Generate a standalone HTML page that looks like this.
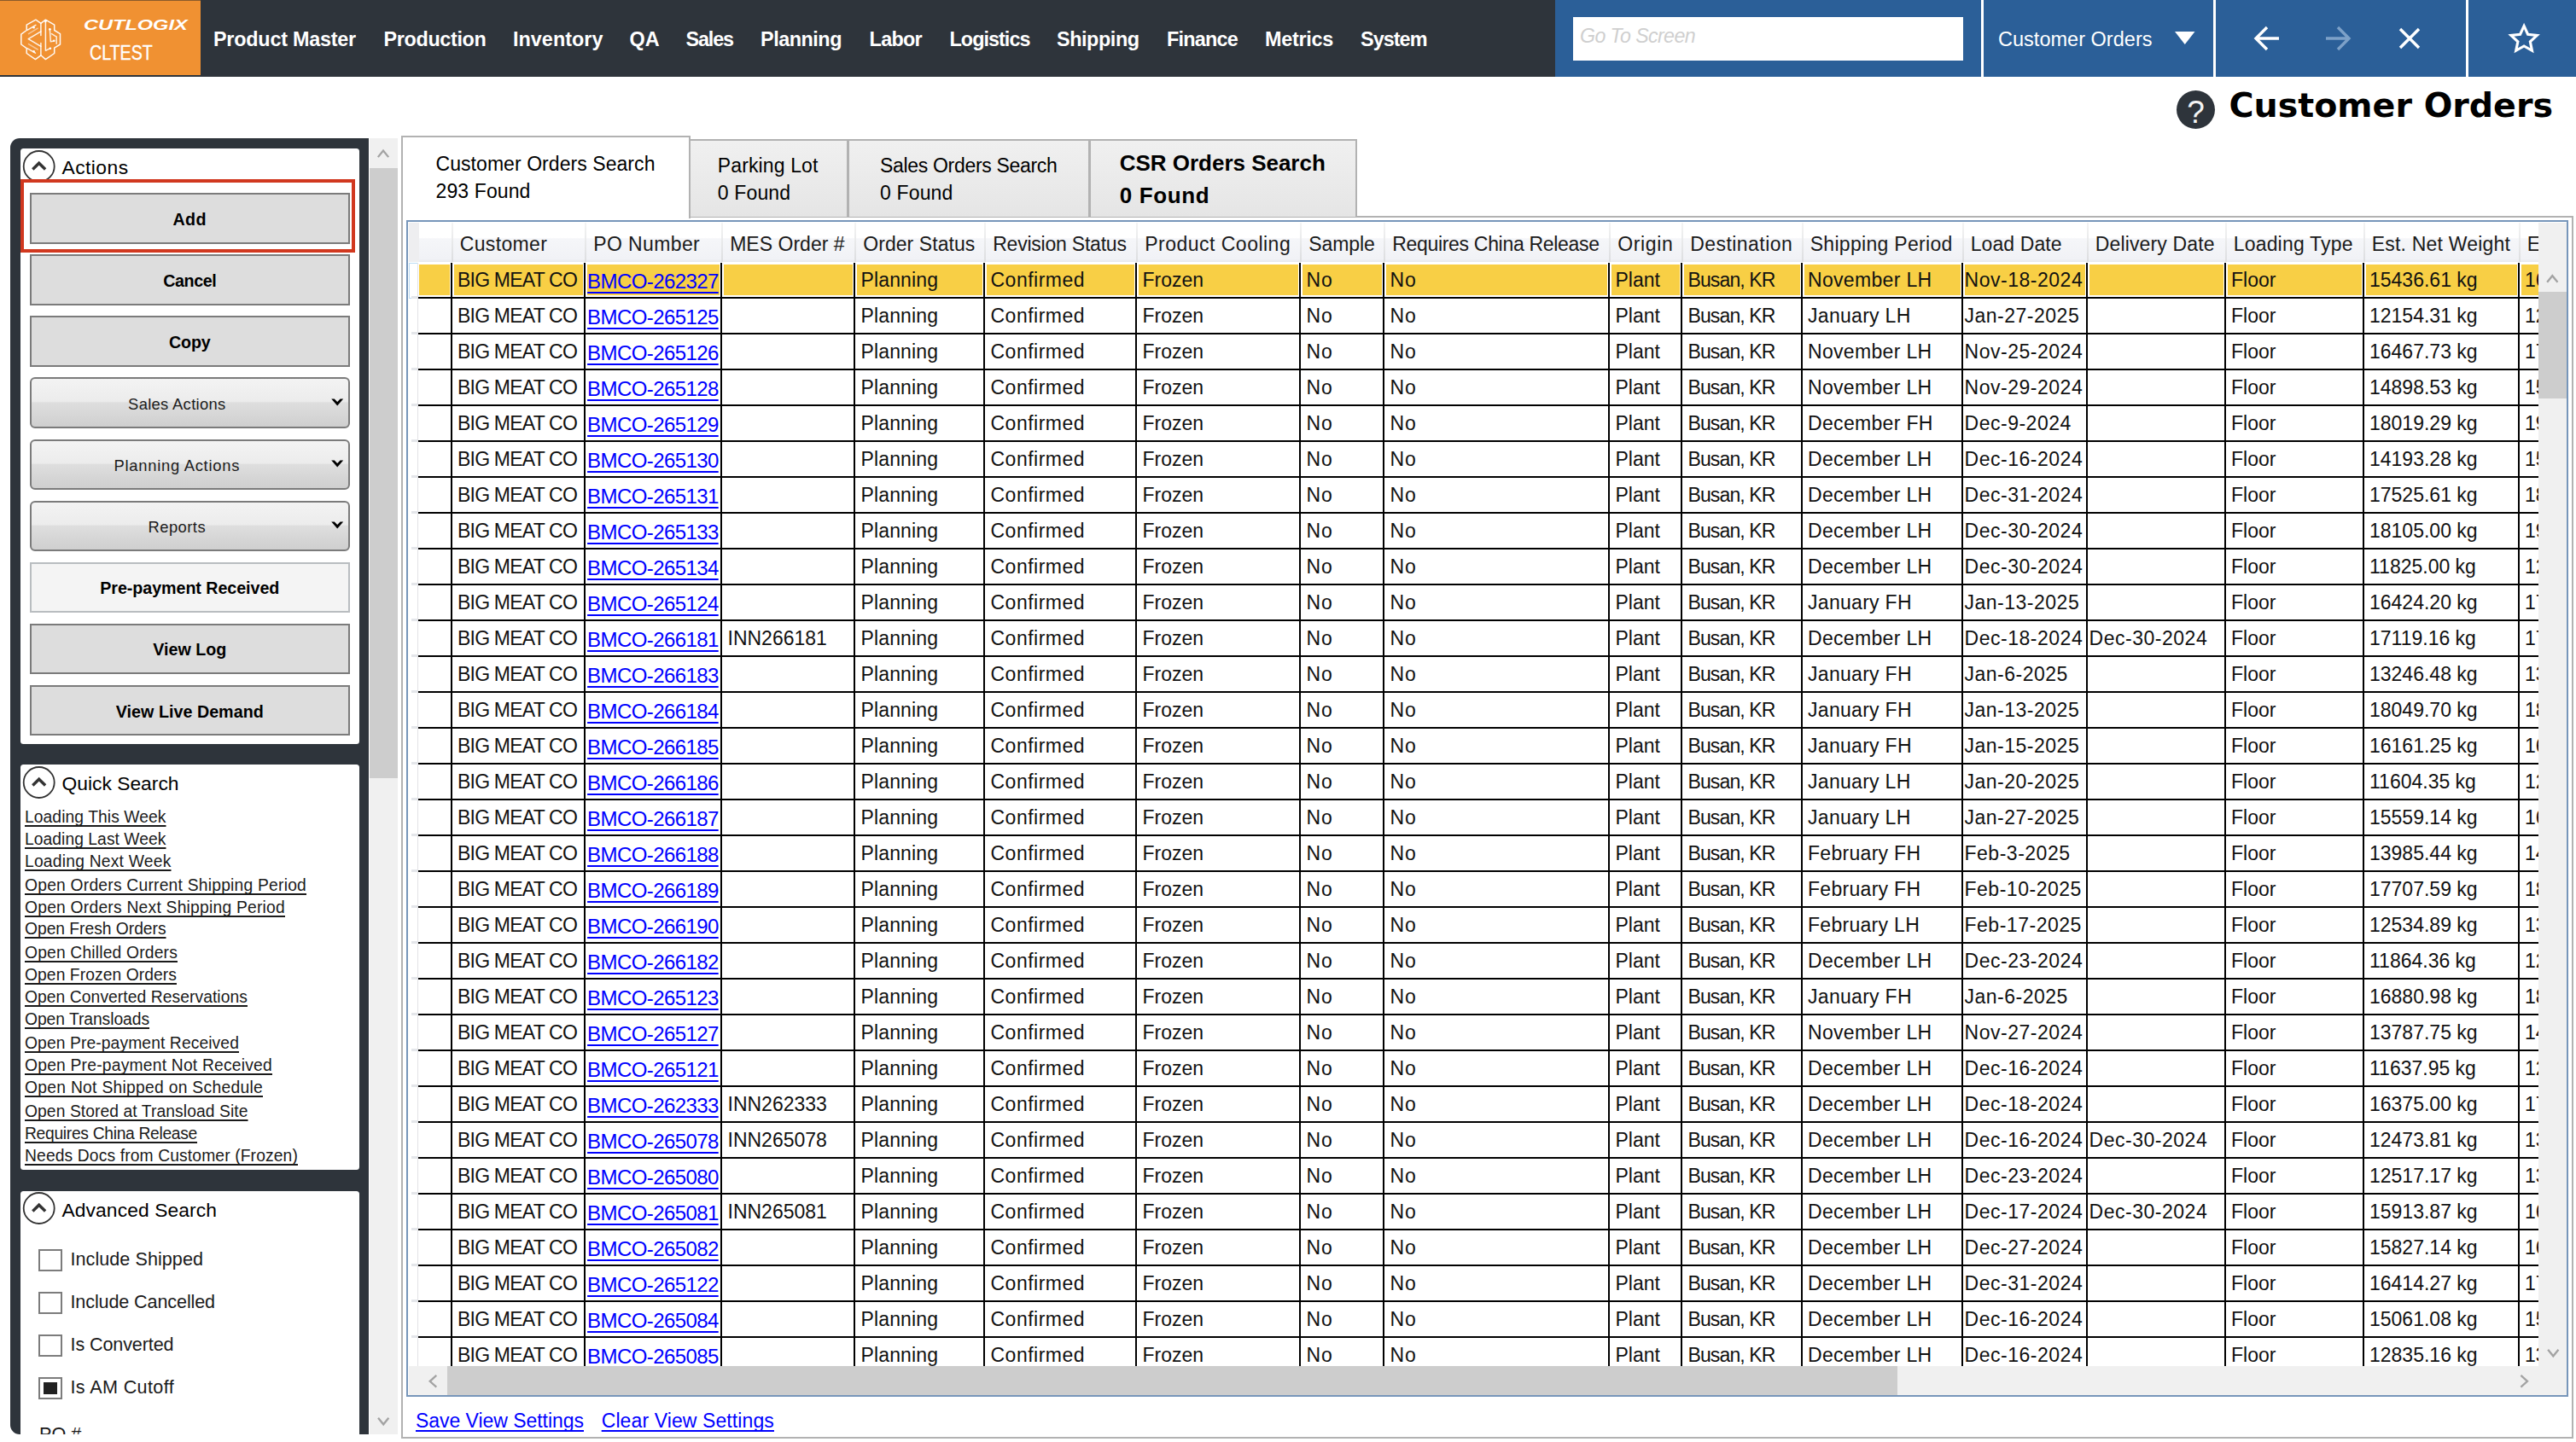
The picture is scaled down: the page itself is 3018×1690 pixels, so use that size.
<!DOCTYPE html>
<html lang="en"><head><meta charset="utf-8"><title>Customer Orders</title>
<style>html,body{margin:0;padding:0;background:#fff}body{position:relative;width:3018px;height:1690px;overflow:hidden;font-family:"Liberation Sans",sans-serif}</style>
</head><body>
<div style="position:absolute;left:0px;top:0px;width:3018px;height:90px;background:#2e343b"></div>
<div style="position:absolute;left:0px;top:0px;width:235px;height:88px;background:#f09132;border-top:1px solid #8a5a2a;box-sizing:border-box"></div>
<div style="position:absolute;left:1822px;top:0px;width:1196px;height:90px;background:#2b5f98"></div>
<svg style="position:absolute;left:20px;top:18px" width="56" height="56" viewBox="20 18 56 56" fill="none" stroke="#fff" stroke-width="1.5" stroke-linejoin="round" stroke-linecap="round">
<path d="M41.9 23.2 L31.2 29.1 L31.2 35.5 L24.8 40.1 L24.8 52 L31.2 56.6 L31.2 62.5 L41.5 69.6 L47.9 64.8 L53.4 69.6 L63.7 62.5 L63.7 56.1 L70.5 52 L70.5 39.6 L63.7 35.5 L63.7 29.1 L53.4 23.2 L47.9 27.3 Z" stroke-opacity="0.95"/>
<path d="M47.9 27.3 L47.9 41.5 M47.9 50.5 L47.9 64.8 M53.4 24.5 L53.4 59.3 L58.9 56.6" stroke-opacity="0.9"/>
<path d="M32.3 35.2 L41.9 29.4 M47.9 36.9 L33.2 45.6 L47.9 54.3 M32.3 56.8 L41.5 62.1" stroke-opacity="0.9"/>
<path d="M33.5 39.6 L44.2 33.2 M33.5 51.6 L44.2 58" stroke-opacity="0.5"/>
<path d="M58.4 34.5 L59.3 48.8 L63.2 47.9 M60.5 39.7 L66.2 43.1 M66.2 43.1 L66.2 51.2" stroke-opacity="0.85"/>
<circle cx="39.6" cy="32.3" r="1.3" fill="#fff" stroke="none"/><circle cx="39.6" cy="60.2" r="1.3" fill="#fff" stroke="none"/><circle cx="58.4" cy="34.3" r="1.4" fill="#fff" stroke="none"/><circle cx="63.3" cy="47.8" r="1.3" fill="#fff" stroke="none"/><circle cx="58.9" cy="56.7" r="1.3" fill="#fff" stroke="none"/><circle cx="53.4" cy="25" r="1.2" fill="#fff" stroke="none"/>
</svg>
<span style="position:absolute;left:98.30px;top:21.95px;line-height:1;white-space:pre;font-family:'Liberation Sans',sans-serif;font-size:16.6px;font-weight:bold;font-style:italic;color:#fff;transform:scaleX(1.4195);transform-origin:0 0;">CUTLOGIX</span>
<span style="position:absolute;left:104.80px;top:49.51px;line-height:1;white-space:pre;font-family:'Liberation Sans',sans-serif;font-size:24.2px;font-weight:normal;color:#fff;transform:scaleX(0.8103);transform-origin:0 0;-webkit-text-stroke:0.4px #fff;">CLTEST</span>
<span style="position:absolute;left:250.00px;top:34.69px;line-height:1;white-space:pre;font-family:'Liberation Sans',sans-serif;font-size:23.4px;font-weight:bold;color:#fff;letter-spacing:-0.234px;">Product Master</span>
<span style="position:absolute;left:449.50px;top:34.69px;line-height:1;white-space:pre;font-family:'Liberation Sans',sans-serif;font-size:23.4px;font-weight:bold;color:#fff;letter-spacing:-0.345px;">Production</span>
<span style="position:absolute;left:601.00px;top:34.69px;line-height:1;white-space:pre;font-family:'Liberation Sans',sans-serif;font-size:23.4px;font-weight:bold;color:#fff;letter-spacing:0.024px;">Inventory</span>
<span style="position:absolute;left:737.50px;top:34.69px;line-height:1;white-space:pre;font-family:'Liberation Sans',sans-serif;font-size:23.4px;font-weight:bold;color:#fff;letter-spacing:-0.047px;">QA</span>
<span style="position:absolute;left:803.50px;top:34.69px;line-height:1;white-space:pre;font-family:'Liberation Sans',sans-serif;font-size:23.4px;font-weight:bold;color:#fff;letter-spacing:-1.128px;">Sales</span>
<span style="position:absolute;left:891.00px;top:34.69px;line-height:1;white-space:pre;font-family:'Liberation Sans',sans-serif;font-size:23.4px;font-weight:bold;color:#fff;letter-spacing:-0.471px;">Planning</span>
<span style="position:absolute;left:1018.60px;top:34.69px;line-height:1;white-space:pre;font-family:'Liberation Sans',sans-serif;font-size:23.4px;font-weight:bold;color:#fff;letter-spacing:-0.717px;">Labor</span>
<span style="position:absolute;left:1112.50px;top:34.69px;line-height:1;white-space:pre;font-family:'Liberation Sans',sans-serif;font-size:23.4px;font-weight:bold;color:#fff;letter-spacing:-0.965px;">Logistics</span>
<span style="position:absolute;left:1238.00px;top:34.69px;line-height:1;white-space:pre;font-family:'Liberation Sans',sans-serif;font-size:23.4px;font-weight:bold;color:#fff;letter-spacing:-0.431px;">Shipping</span>
<span style="position:absolute;left:1367.00px;top:34.69px;line-height:1;white-space:pre;font-family:'Liberation Sans',sans-serif;font-size:23.4px;font-weight:bold;color:#fff;letter-spacing:-0.770px;">Finance</span>
<span style="position:absolute;left:1482.00px;top:34.69px;line-height:1;white-space:pre;font-family:'Liberation Sans',sans-serif;font-size:23.4px;font-weight:bold;color:#fff;letter-spacing:-0.272px;">Metrics</span>
<span style="position:absolute;left:1594.00px;top:34.69px;line-height:1;white-space:pre;font-family:'Liberation Sans',sans-serif;font-size:23.4px;font-weight:bold;color:#fff;letter-spacing:-0.953px;">System</span>
<div style="position:absolute;left:1843px;top:19.5px;width:457px;height:51px;background:#fff"></div>
<span style="position:absolute;left:1851.00px;top:30.66px;line-height:1;white-space:pre;font-family:'Liberation Sans',sans-serif;font-size:23.2px;font-weight:normal;font-style:italic;color:#cfcfcf;letter-spacing:-0.602px;">Go To Screen</span>
<div style="position:absolute;left:2321px;top:0px;width:3px;height:90px;background:#fff"></div>
<div style="position:absolute;left:2593px;top:0px;width:3px;height:90px;background:#fff"></div>
<div style="position:absolute;left:2889px;top:0px;width:3px;height:90px;background:#fff"></div>
<span style="position:absolute;left:2341.00px;top:34.61px;line-height:1;white-space:pre;font-family:'Liberation Sans',sans-serif;font-size:23.5px;font-weight:normal;color:#fff;letter-spacing:0.019px;">Customer Orders</span>
<svg style="position:absolute;left:2547px;top:36px" width="26" height="18" viewBox="0 0 26 18"><path d="M1 1 L24.5 1 L12.75 16 Z" fill="#fff"/></svg>
<svg style="position:absolute;left:2638px;top:28px" width="36" height="34" viewBox="0 0 36 34" fill="none" stroke="#fff" stroke-width="3.4"><path d="M32 17 L5.5 17 M18 4 L5 17 L18 30"/></svg>
<svg style="position:absolute;left:2721px;top:28px" width="36" height="34" viewBox="0 0 36 34" fill="none" stroke="#7da1c8" stroke-width="3.4"><path d="M4 17 L30.5 17 M18 4 L31 17 L18 30"/></svg>
<svg style="position:absolute;left:2808px;top:30px" width="30" height="30" viewBox="0 0 30 30" fill="none" stroke="#fff" stroke-width="3.4"><path d="M4 4 L26 26 M26 4 L4 26"/></svg>
<svg style="position:absolute;left:2936px;top:25px" width="44" height="42" viewBox="2936 25 44 42" fill="none" stroke="#fff" stroke-width="3.1" stroke-linejoin="miter"><path d="M2957.10 30.40 L2961.57 40.25 L2972.32 41.46 L2964.33 48.75 L2966.50 59.34 L2957.10 54.00 L2947.70 59.34 L2949.87 48.75 L2941.88 41.46 L2952.63 40.25 Z"/></svg>
<div style="position:absolute;left:2550px;top:106px;width:45px;height:45px;background:#2e343b;border-radius:50%"></div>
<span style="position:absolute;left:2562.30px;top:112.68px;line-height:1;white-space:pre;font-family:'Liberation Sans',sans-serif;font-size:37px;font-weight:normal;color:#f4f4f4;">?</span>
<span style="position:absolute;left:2611.50px;top:103.98px;line-height:1;white-space:pre;font-family:'DejaVu Sans','Liberation Sans',sans-serif;font-size:39.6px;font-weight:bold;color:#000;letter-spacing:-0.013px;">Customer Orders</span>
<div style="position:absolute;left:12px;top:162px;width:420px;height:1519px;background:#2e343b;border-radius:11px 0 0 11px"></div>
<div style="position:absolute;left:433px;top:162px;width:33px;height:1519px;background:#f0f0f0"></div>
<div style="position:absolute;left:433px;top:197px;width:33px;height:714.5px;background:#cdcdcd"></div>
<svg style="position:absolute;left:437px;top:168px" width="24" height="24" viewBox="437 168 24 24" fill="none" stroke="#a3a3a3" stroke-width="2.3"><path d="M442.85 184.10 L449.00 176.50 L455.15 184.10"/></svg>
<svg style="position:absolute;left:437px;top:1653px" width="24" height="24" viewBox="437 1653 24 24" fill="none" stroke="#a3a3a3" stroke-width="2.3"><path d="M443.05 1661.70 L449.20 1669.30 L455.35 1661.70"/></svg>
<div style="position:absolute;left:24px;top:174px;width:397px;height:698px;background:#fff;border-radius:3.5px"></div>
<div style="position:absolute;left:24px;top:896px;width:397px;height:475px;background:#fff;border-radius:3.5px"></div>
<div style="position:absolute;left:24px;top:1396px;width:397px;height:285px;background:#fff;border-radius:3.5px 3.5px 0 0"></div>
<svg style="position:absolute;left:26px;top:175.2px" width="40" height="40" viewBox="0 0 40 40" fill="none"><circle cx="19.7" cy="20" r="18" fill="#fff" stroke="#333" stroke-width="1.8"/><path d="M12.3 23.5 L19.7 16.2 L27.1 23.5" stroke="#333" stroke-width="3.4"/></svg>
<svg style="position:absolute;left:26px;top:896.8px" width="40" height="40" viewBox="0 0 40 40" fill="none"><circle cx="19.7" cy="20" r="18" fill="#fff" stroke="#333" stroke-width="1.8"/><path d="M12.3 23.5 L19.7 16.2 L27.1 23.5" stroke="#333" stroke-width="3.4"/></svg>
<svg style="position:absolute;left:26px;top:1396.2px" width="40" height="40" viewBox="0 0 40 40" fill="none"><circle cx="19.7" cy="20" r="18" fill="#fff" stroke="#333" stroke-width="1.8"/><path d="M12.3 23.5 L19.7 16.2 L27.1 23.5" stroke="#333" stroke-width="3.4"/></svg>
<span style="position:absolute;left:72.50px;top:185.20px;line-height:1;white-space:pre;font-family:'Liberation Sans',sans-serif;font-size:22.8px;font-weight:normal;color:#000;letter-spacing:0.462px;">Actions</span>
<span style="position:absolute;left:72.50px;top:907.00px;line-height:1;white-space:pre;font-family:'Liberation Sans',sans-serif;font-size:22.8px;font-weight:normal;color:#000;letter-spacing:0.013px;">Quick Search</span>
<span style="position:absolute;left:72.50px;top:1406.50px;line-height:1;white-space:pre;font-family:'Liberation Sans',sans-serif;font-size:22.8px;font-weight:normal;color:#000;letter-spacing:0.102px;">Advanced Search</span>
<div style="position:absolute;left:34.5px;top:226.3px;width:375.5px;height:59.5px;background:#dddddd;border:2px solid #7b7b7b;box-sizing:border-box"></div>
<span style="position:absolute;left:202.50px;top:248.02px;line-height:1;white-space:pre;font-family:'Liberation Sans',sans-serif;font-size:19.7px;font-weight:bold;color:#000;letter-spacing:0.406px;">Add</span>
<div style="position:absolute;left:34.5px;top:298.36px;width:375.5px;height:59.5px;background:#dddddd;border:2px solid #7b7b7b;box-sizing:border-box"></div>
<span style="position:absolute;left:191.25px;top:320.08px;line-height:1;white-space:pre;font-family:'Liberation Sans',sans-serif;font-size:19.7px;font-weight:bold;color:#000;letter-spacing:-0.427px;">Cancel</span>
<div style="position:absolute;left:34.5px;top:370.42px;width:375.5px;height:59.5px;background:#dddddd;border:2px solid #7b7b7b;box-sizing:border-box"></div>
<span style="position:absolute;left:198.00px;top:392.14px;line-height:1;white-space:pre;font-family:'Liberation Sans',sans-serif;font-size:19.7px;font-weight:bold;color:#000;letter-spacing:-0.180px;">Copy</span>
<div style="position:absolute;left:34.5px;top:442.48px;width:375.5px;height:59.5px;background:linear-gradient(#f3f3f3 0%,#ececec 47%,#dedede 50%,#cfcfcf 100%);border:2px solid #7b7b7b;border-radius:6px;box-sizing:border-box"></div>
<span style="position:absolute;left:150.05px;top:465.10px;line-height:1;white-space:pre;font-family:'Liberation Sans',sans-serif;font-size:18.4px;font-weight:normal;color:#1b1b1b;letter-spacing:0.315px;">Sales Actions</span>
<svg style="position:absolute;left:388.4px;top:467.3px" width="15" height="10" viewBox="0 0 15 10"><path d="M0.2 0.4 L3.8 0.4 L7.2 4 L10.6 0.4 L14.2 0.4 L7.2 8.6 Z" fill="#000"/></svg>
<div style="position:absolute;left:34.5px;top:514.54px;width:375.5px;height:59.5px;background:linear-gradient(#f3f3f3 0%,#ececec 47%,#dedede 50%,#cfcfcf 100%);border:2px solid #7b7b7b;border-radius:6px;box-sizing:border-box"></div>
<span style="position:absolute;left:133.55px;top:537.16px;line-height:1;white-space:pre;font-family:'Liberation Sans',sans-serif;font-size:18.4px;font-weight:normal;color:#1b1b1b;letter-spacing:0.720px;">Planning Actions</span>
<svg style="position:absolute;left:388.4px;top:539.3px" width="15" height="10" viewBox="0 0 15 10"><path d="M0.2 0.4 L3.8 0.4 L7.2 4 L10.6 0.4 L14.2 0.4 L7.2 8.6 Z" fill="#000"/></svg>
<div style="position:absolute;left:34.5px;top:586.6px;width:375.5px;height:59.5px;background:linear-gradient(#f3f3f3 0%,#ececec 47%,#dedede 50%,#cfcfcf 100%);border:2px solid #7b7b7b;border-radius:6px;box-sizing:border-box"></div>
<span style="position:absolute;left:173.55px;top:609.22px;line-height:1;white-space:pre;font-family:'Liberation Sans',sans-serif;font-size:18.4px;font-weight:normal;color:#1b1b1b;letter-spacing:0.442px;">Reports</span>
<svg style="position:absolute;left:388.4px;top:611.4px" width="15" height="10" viewBox="0 0 15 10"><path d="M0.2 0.4 L3.8 0.4 L7.2 4 L10.6 0.4 L14.2 0.4 L7.2 8.6 Z" fill="#000"/></svg>
<div style="position:absolute;left:34.5px;top:658.6600000000001px;width:375.5px;height:59.5px;background:#f4f4f4;border:2px solid #b9bdc0;box-sizing:border-box"></div>
<span style="position:absolute;left:117.25px;top:680.38px;line-height:1;white-space:pre;font-family:'Liberation Sans',sans-serif;font-size:19.7px;font-weight:bold;color:#000;letter-spacing:-0.060px;">Pre-payment Received</span>
<div style="position:absolute;left:34.5px;top:730.72px;width:375.5px;height:59.5px;background:#dddddd;border:2px solid #7b7b7b;box-sizing:border-box"></div>
<span style="position:absolute;left:179.25px;top:752.44px;line-height:1;white-space:pre;font-family:'Liberation Sans',sans-serif;font-size:19.7px;font-weight:bold;color:#000;letter-spacing:-0.008px;">View Log</span>
<div style="position:absolute;left:34.5px;top:802.78px;width:375.5px;height:59.5px;background:#dddddd;border:2px solid #7b7b7b;box-sizing:border-box"></div>
<span style="position:absolute;left:135.75px;top:824.50px;line-height:1;white-space:pre;font-family:'Liberation Sans',sans-serif;font-size:19.7px;font-weight:bold;color:#000;letter-spacing:0.030px;">View Live Demand</span>
<div style="position:absolute;left:24px;top:209.5px;width:392px;height:86.5px;border:4.5px solid #d1381f;box-sizing:border-box"></div>
<span style="position:absolute;left:29.00px;top:948.46px;line-height:1;white-space:pre;font-family:'Liberation Sans',sans-serif;font-size:19.3px;font-weight:normal;color:#1a1a1a;letter-spacing:0.067px;text-decoration:underline;text-decoration-thickness:1.7px;text-underline-offset:2.8px;text-decoration-skip-ink:none">Loading This Week</span>
<span style="position:absolute;left:29.00px;top:974.46px;line-height:1;white-space:pre;font-family:'Liberation Sans',sans-serif;font-size:19.3px;font-weight:normal;color:#1a1a1a;letter-spacing:0.045px;text-decoration:underline;text-decoration-thickness:1.7px;text-underline-offset:2.8px;text-decoration-skip-ink:none">Loading Last Week</span>
<span style="position:absolute;left:29.00px;top:1000.46px;line-height:1;white-space:pre;font-family:'Liberation Sans',sans-serif;font-size:19.3px;font-weight:normal;color:#1a1a1a;letter-spacing:0.210px;text-decoration:underline;text-decoration-thickness:1.7px;text-underline-offset:2.8px;text-decoration-skip-ink:none">Loading Next Week</span>
<span style="position:absolute;left:29.00px;top:1028.46px;line-height:1;white-space:pre;font-family:'Liberation Sans',sans-serif;font-size:19.3px;font-weight:normal;color:#1a1a1a;letter-spacing:0.212px;text-decoration:underline;text-decoration-thickness:1.7px;text-underline-offset:2.8px;text-decoration-skip-ink:none">Open Orders Current Shipping Period</span>
<span style="position:absolute;left:29.00px;top:1054.46px;line-height:1;white-space:pre;font-family:'Liberation Sans',sans-serif;font-size:19.3px;font-weight:normal;color:#1a1a1a;letter-spacing:0.220px;text-decoration:underline;text-decoration-thickness:1.7px;text-underline-offset:2.8px;text-decoration-skip-ink:none">Open Orders Next Shipping Period</span>
<span style="position:absolute;left:29.00px;top:1078.96px;line-height:1;white-space:pre;font-family:'Liberation Sans',sans-serif;font-size:19.3px;font-weight:normal;color:#1a1a1a;letter-spacing:-0.035px;text-decoration:underline;text-decoration-thickness:1.7px;text-underline-offset:2.8px;text-decoration-skip-ink:none">Open Fresh Orders</span>
<span style="position:absolute;left:29.00px;top:1107.46px;line-height:1;white-space:pre;font-family:'Liberation Sans',sans-serif;font-size:19.3px;font-weight:normal;color:#1a1a1a;letter-spacing:0.170px;text-decoration:underline;text-decoration-thickness:1.7px;text-underline-offset:2.8px;text-decoration-skip-ink:none">Open Chilled Orders</span>
<span style="position:absolute;left:29.00px;top:1133.46px;line-height:1;white-space:pre;font-family:'Liberation Sans',sans-serif;font-size:19.3px;font-weight:normal;color:#1a1a1a;letter-spacing:0.065px;text-decoration:underline;text-decoration-thickness:1.7px;text-underline-offset:2.8px;text-decoration-skip-ink:none">Open Frozen Orders</span>
<span style="position:absolute;left:29.00px;top:1159.46px;line-height:1;white-space:pre;font-family:'Liberation Sans',sans-serif;font-size:19.3px;font-weight:normal;color:#1a1a1a;letter-spacing:0.060px;text-decoration:underline;text-decoration-thickness:1.7px;text-underline-offset:2.8px;text-decoration-skip-ink:none">Open Converted Reservations</span>
<span style="position:absolute;left:29.00px;top:1185.46px;line-height:1;white-space:pre;font-family:'Liberation Sans',sans-serif;font-size:19.3px;font-weight:normal;color:#1a1a1a;letter-spacing:-0.056px;text-decoration:underline;text-decoration-thickness:1.7px;text-underline-offset:2.8px;text-decoration-skip-ink:none">Open Transloads</span>
<span style="position:absolute;left:29.00px;top:1213.46px;line-height:1;white-space:pre;font-family:'Liberation Sans',sans-serif;font-size:19.3px;font-weight:normal;color:#1a1a1a;letter-spacing:0.094px;text-decoration:underline;text-decoration-thickness:1.7px;text-underline-offset:2.8px;text-decoration-skip-ink:none">Open Pre-payment Received</span>
<span style="position:absolute;left:29.00px;top:1239.46px;line-height:1;white-space:pre;font-family:'Liberation Sans',sans-serif;font-size:19.3px;font-weight:normal;color:#1a1a1a;letter-spacing:0.206px;text-decoration:underline;text-decoration-thickness:1.7px;text-underline-offset:2.8px;text-decoration-skip-ink:none">Open Pre-payment Not Received</span>
<span style="position:absolute;left:29.00px;top:1265.46px;line-height:1;white-space:pre;font-family:'Liberation Sans',sans-serif;font-size:19.3px;font-weight:normal;color:#1a1a1a;letter-spacing:0.278px;text-decoration:underline;text-decoration-thickness:1.7px;text-underline-offset:2.8px;text-decoration-skip-ink:none">Open Not Shipped on Schedule</span>
<span style="position:absolute;left:29.00px;top:1293.46px;line-height:1;white-space:pre;font-family:'Liberation Sans',sans-serif;font-size:19.3px;font-weight:normal;color:#1a1a1a;letter-spacing:0.073px;text-decoration:underline;text-decoration-thickness:1.7px;text-underline-offset:2.8px;text-decoration-skip-ink:none">Open Stored at Transload Site</span>
<span style="position:absolute;left:29.00px;top:1319.46px;line-height:1;white-space:pre;font-family:'Liberation Sans',sans-serif;font-size:19.3px;font-weight:normal;color:#1a1a1a;letter-spacing:-0.318px;text-decoration:underline;text-decoration-thickness:1.7px;text-underline-offset:2.8px;text-decoration-skip-ink:none">Requires China Release</span>
<span style="position:absolute;left:29.00px;top:1345.46px;line-height:1;white-space:pre;font-family:'Liberation Sans',sans-serif;font-size:19.3px;font-weight:normal;color:#1a1a1a;letter-spacing:0.118px;text-decoration:underline;text-decoration-thickness:1.7px;text-underline-offset:2.8px;text-decoration-skip-ink:none">Needs Docs from Customer (Frozen)</span>
<div style="position:absolute;left:44.5px;top:1464px;width:28px;height:25.5px;border:2px solid #7c7c7c;background:#fff;box-sizing:border-box"></div>
<span style="position:absolute;left:82.50px;top:1465.42px;line-height:1;white-space:pre;font-family:'Liberation Sans',sans-serif;font-size:21.6px;font-weight:normal;color:#1a1a1a;letter-spacing:0.041px;">Include Shipped</span>
<div style="position:absolute;left:44.5px;top:1514px;width:28px;height:25.5px;border:2px solid #7c7c7c;background:#fff;box-sizing:border-box"></div>
<span style="position:absolute;left:82.50px;top:1515.42px;line-height:1;white-space:pre;font-family:'Liberation Sans',sans-serif;font-size:21.6px;font-weight:normal;color:#1a1a1a;letter-spacing:-0.128px;">Include Cancelled</span>
<div style="position:absolute;left:44.5px;top:1564px;width:28px;height:25.5px;border:2px solid #7c7c7c;background:#fff;box-sizing:border-box"></div>
<span style="position:absolute;left:82.50px;top:1565.42px;line-height:1;white-space:pre;font-family:'Liberation Sans',sans-serif;font-size:21.6px;font-weight:normal;color:#1a1a1a;letter-spacing:-0.120px;">Is Converted</span>
<div style="position:absolute;left:44.5px;top:1614px;width:28px;height:25.5px;border:2px solid #7c7c7c;background:#fff;box-sizing:border-box"></div>
<span style="position:absolute;left:82.50px;top:1615.42px;line-height:1;white-space:pre;font-family:'Liberation Sans',sans-serif;font-size:21.6px;font-weight:normal;color:#1a1a1a;letter-spacing:0.357px;">Is AM Cutoff</span>
<div style="position:absolute;left:51px;top:1620px;width:16px;height:13.5px;background:#212121"></div>
<div style="position:absolute;left:0;top:1660px;width:430px;height:21px;overflow:hidden">
<span style="position:absolute;left:46.00px;top:9.72px;line-height:1;white-space:pre;font-family:'Liberation Sans',sans-serif;font-size:21.6px;font-weight:normal;color:#1a1a1a;">PO #</span>
</div>
<div style="position:absolute;left:470px;top:253px;width:2545px;height:1433px;border:2px solid #b2b2b2;box-sizing:border-box;background:#fff"></div>
<div style="position:absolute;left:807px;top:163px;width:188px;height:91px;background:linear-gradient(#f0f0f0,#e5e5e5);border:2px solid #b2b2b2;border-bottom:none;box-sizing:border-box"></div>
<div style="position:absolute;left:993px;top:163px;width:284px;height:91px;background:linear-gradient(#f0f0f0,#e5e5e5);border:2px solid #b2b2b2;border-bottom:none;box-sizing:border-box"></div>
<div style="position:absolute;left:1275px;top:163px;width:314.5px;height:91px;background:linear-gradient(#f0f0f0,#e5e5e5);border:2px solid #b2b2b2;border-bottom:none;box-sizing:border-box"></div>
<div style="position:absolute;left:992px;top:163px;width:3px;height:91px;background:#b2b2b2"></div>
<div style="position:absolute;left:1274.5px;top:163px;width:3px;height:91px;background:#b2b2b2"></div>
<div style="position:absolute;left:470px;top:158.5px;width:339px;height:97px;background:#fff;border:2px solid #b2b2b2;border-bottom:none;box-sizing:border-box"></div>
<span style="position:absolute;left:510.50px;top:180.53px;line-height:1;white-space:pre;font-family:'Liberation Sans',sans-serif;font-size:23px;font-weight:normal;color:#000;letter-spacing:0.062px;">Customer Orders Search</span>
<span style="position:absolute;left:510.50px;top:213.03px;line-height:1;white-space:pre;font-family:'Liberation Sans',sans-serif;font-size:23px;font-weight:normal;color:#000;letter-spacing:0.113px;">293 Found</span>
<span style="position:absolute;left:840.75px;top:182.53px;line-height:1;white-space:pre;font-family:'Liberation Sans',sans-serif;font-size:23px;font-weight:normal;color:#000;letter-spacing:0.126px;">Parking Lot</span>
<span style="position:absolute;left:840.75px;top:215.13px;line-height:1;white-space:pre;font-family:'Liberation Sans',sans-serif;font-size:23px;font-weight:normal;color:#000;letter-spacing:0.156px;">0 Found</span>
<span style="position:absolute;left:1031.00px;top:182.53px;line-height:1;white-space:pre;font-family:'Liberation Sans',sans-serif;font-size:23px;font-weight:normal;color:#000;letter-spacing:-0.315px;">Sales Orders Search</span>
<span style="position:absolute;left:1031.00px;top:215.13px;line-height:1;white-space:pre;font-family:'Liberation Sans',sans-serif;font-size:23px;font-weight:normal;color:#000;letter-spacing:0.156px;">0 Found</span>
<span style="position:absolute;left:1311.75px;top:177.99px;line-height:1;white-space:pre;font-family:'Liberation Sans',sans-serif;font-size:26px;font-weight:bold;color:#000;letter-spacing:-0.019px;">CSR Orders Search</span>
<span style="position:absolute;left:1311.75px;top:216.24px;line-height:1;white-space:pre;font-family:'Liberation Sans',sans-serif;font-size:26px;font-weight:bold;color:#000;letter-spacing:0.629px;">0 Found</span>
<div style="position:absolute;left:476px;top:258px;width:2533px;height:1379px;border:2px solid #7796ba;box-sizing:border-box;background:#fff"></div>
<div style="position:absolute;left:479px;top:261px;width:2495px;height:1340px;overflow:hidden">
<div style="position:absolute;left:0;top:0;width:2495px;height:46px;background:linear-gradient(#ffffff 0%,#ffffff 38%,#f5f6f9 41%,#f1f2f6 92%,#e6e8ec 100%)"></div>
<div style="position:absolute;left:0;top:0;width:12px;height:46px;background:#eeeef0"></div>
<div style="position:absolute;left:49.5px;top:0;width:2px;height:46px;background:linear-gradient(#f4f4f4,#dcdde0)"></div>
<span style="position:absolute;left:59.70px;top:13.78px;line-height:1;white-space:pre;font-family:'Liberation Sans',sans-serif;font-size:23px;font-weight:normal;color:#1a1a1a;letter-spacing:0.362px;">Customer</span>
<div style="position:absolute;left:206.0px;top:0;width:2px;height:46px;background:linear-gradient(#f4f4f4,#dcdde0)"></div>
<span style="position:absolute;left:216.20px;top:13.78px;line-height:1;white-space:pre;font-family:'Liberation Sans',sans-serif;font-size:23px;font-weight:normal;color:#1a1a1a;letter-spacing:0.396px;">PO Number</span>
<div style="position:absolute;left:366.0px;top:0;width:2px;height:46px;background:linear-gradient(#f4f4f4,#dcdde0)"></div>
<span style="position:absolute;left:376.20px;top:13.78px;line-height:1;white-space:pre;font-family:'Liberation Sans',sans-serif;font-size:23px;font-weight:normal;color:#1a1a1a;letter-spacing:0.026px;">MES Order #</span>
<div style="position:absolute;left:522.0px;top:0;width:2px;height:46px;background:linear-gradient(#f4f4f4,#dcdde0)"></div>
<span style="position:absolute;left:532.20px;top:13.78px;line-height:1;white-space:pre;font-family:'Liberation Sans',sans-serif;font-size:23px;font-weight:normal;color:#1a1a1a;letter-spacing:0.072px;">Order Status</span>
<div style="position:absolute;left:674.0px;top:0;width:2px;height:46px;background:linear-gradient(#f4f4f4,#dcdde0)"></div>
<span style="position:absolute;left:684.20px;top:13.78px;line-height:1;white-space:pre;font-family:'Liberation Sans',sans-serif;font-size:23px;font-weight:normal;color:#1a1a1a;letter-spacing:-0.221px;">Revision Status</span>
<div style="position:absolute;left:852.0px;top:0;width:2px;height:46px;background:linear-gradient(#f4f4f4,#dcdde0)"></div>
<span style="position:absolute;left:862.20px;top:13.78px;line-height:1;white-space:pre;font-family:'Liberation Sans',sans-serif;font-size:23px;font-weight:normal;color:#1a1a1a;letter-spacing:0.490px;">Product Cooling</span>
<div style="position:absolute;left:1044.0px;top:0;width:2px;height:46px;background:linear-gradient(#f4f4f4,#dcdde0)"></div>
<span style="position:absolute;left:1054.20px;top:13.78px;line-height:1;white-space:pre;font-family:'Liberation Sans',sans-serif;font-size:23px;font-weight:normal;color:#1a1a1a;letter-spacing:-0.081px;">Sample</span>
<div style="position:absolute;left:1142.0px;top:0;width:2px;height:46px;background:linear-gradient(#f4f4f4,#dcdde0)"></div>
<span style="position:absolute;left:1152.20px;top:13.78px;line-height:1;white-space:pre;font-family:'Liberation Sans',sans-serif;font-size:23px;font-weight:normal;color:#1a1a1a;letter-spacing:-0.310px;">Requires China Release</span>
<div style="position:absolute;left:1406.0px;top:0;width:2px;height:46px;background:linear-gradient(#f4f4f4,#dcdde0)"></div>
<span style="position:absolute;left:1416.20px;top:13.78px;line-height:1;white-space:pre;font-family:'Liberation Sans',sans-serif;font-size:23px;font-weight:normal;color:#1a1a1a;letter-spacing:0.648px;">Origin</span>
<div style="position:absolute;left:1491.0px;top:0;width:2px;height:46px;background:linear-gradient(#f4f4f4,#dcdde0)"></div>
<span style="position:absolute;left:1501.20px;top:13.78px;line-height:1;white-space:pre;font-family:'Liberation Sans',sans-serif;font-size:23px;font-weight:normal;color:#1a1a1a;letter-spacing:0.447px;">Destination</span>
<div style="position:absolute;left:1631.5px;top:0;width:2px;height:46px;background:linear-gradient(#f4f4f4,#dcdde0)"></div>
<span style="position:absolute;left:1641.70px;top:13.78px;line-height:1;white-space:pre;font-family:'Liberation Sans',sans-serif;font-size:23px;font-weight:normal;color:#1a1a1a;letter-spacing:0.306px;">Shipping Period</span>
<div style="position:absolute;left:1819.5px;top:0;width:2px;height:46px;background:linear-gradient(#f4f4f4,#dcdde0)"></div>
<span style="position:absolute;left:1829.70px;top:13.78px;line-height:1;white-space:pre;font-family:'Liberation Sans',sans-serif;font-size:23px;font-weight:normal;color:#1a1a1a;letter-spacing:0.095px;">Load Date</span>
<div style="position:absolute;left:1965.5px;top:0;width:2px;height:46px;background:linear-gradient(#f4f4f4,#dcdde0)"></div>
<span style="position:absolute;left:1975.70px;top:13.78px;line-height:1;white-space:pre;font-family:'Liberation Sans',sans-serif;font-size:23px;font-weight:normal;color:#1a1a1a;letter-spacing:0.150px;">Delivery Date</span>
<div style="position:absolute;left:2127.5px;top:0;width:2px;height:46px;background:linear-gradient(#f4f4f4,#dcdde0)"></div>
<span style="position:absolute;left:2137.70px;top:13.78px;line-height:1;white-space:pre;font-family:'Liberation Sans',sans-serif;font-size:23px;font-weight:normal;color:#1a1a1a;letter-spacing:0.191px;">Loading Type</span>
<div style="position:absolute;left:2289.5px;top:0;width:2px;height:46px;background:linear-gradient(#f4f4f4,#dcdde0)"></div>
<span style="position:absolute;left:2299.70px;top:13.78px;line-height:1;white-space:pre;font-family:'Liberation Sans',sans-serif;font-size:23px;font-weight:normal;color:#1a1a1a;letter-spacing:0.208px;">Est. Net Weight</span>
<div style="position:absolute;left:2471.5px;top:0;width:2px;height:46px;background:linear-gradient(#f4f4f4,#dcdde0)"></div>
<span style="position:absolute;left:2481.70px;top:13.78px;line-height:1;white-space:pre;font-family:'Liberation Sans',sans-serif;font-size:23px;font-weight:normal;color:#1a1a1a;letter-spacing:0.005px;">Est. Gross Weight</span>
<div style="position:absolute;left:49.5px;top:0;width:2px;height:46px;background:linear-gradient(#f4f4f4,#dcdde0)"></div>
<div style="position:absolute;left:12.2px;top:49.0px;width:35.6px;height:36.0px;background:#f8cf45"></div>
<div style="position:absolute;left:52.7px;top:49.0px;width:151.6px;height:36.0px;background:#f8cf45"></div>
<div style="position:absolute;left:209.2px;top:49.0px;width:155.1px;height:36.0px;background:#f8cf45"></div>
<div style="position:absolute;left:369.2px;top:49.0px;width:151.1px;height:36.0px;background:#f8cf45"></div>
<div style="position:absolute;left:525.2px;top:49.0px;width:147.1px;height:36.0px;background:#f8cf45"></div>
<div style="position:absolute;left:677.2px;top:49.0px;width:173.1px;height:36.0px;background:#f8cf45"></div>
<div style="position:absolute;left:855.2px;top:49.0px;width:187.1px;height:36.0px;background:#f8cf45"></div>
<div style="position:absolute;left:1047.2px;top:49.0px;width:93.1px;height:36.0px;background:#f8cf45"></div>
<div style="position:absolute;left:1145.2px;top:49.0px;width:259.1px;height:36.0px;background:#f8cf45"></div>
<div style="position:absolute;left:1409.2px;top:49.0px;width:80.1px;height:36.0px;background:#f8cf45"></div>
<div style="position:absolute;left:1494.2px;top:49.0px;width:135.6px;height:36.0px;background:#f8cf45"></div>
<div style="position:absolute;left:1634.7px;top:49.0px;width:183.1px;height:36.0px;background:#f8cf45"></div>
<div style="position:absolute;left:1822.7px;top:49.0px;width:141.1px;height:36.0px;background:#f8cf45"></div>
<div style="position:absolute;left:1968.7px;top:49.0px;width:157.1px;height:36.0px;background:#f8cf45"></div>
<div style="position:absolute;left:2130.7px;top:49.0px;width:157.1px;height:36.0px;background:#f8cf45"></div>
<div style="position:absolute;left:2292.7px;top:49.0px;width:177.1px;height:36.0px;background:#f8cf45"></div>
<div style="position:absolute;left:2474.7px;top:49.0px;width:184.1px;height:36.0px;background:#f8cf45"></div>
<div style="position:absolute;left:0;top:47.0px;width:11px;height:42.0px;border:1.5px solid #bcdcf4;box-sizing:border-box;background:#fff"></div>
<div style="position:absolute;left:11px;top:86.5px;width:2495px;height:2px;background:#000"></div>
<div style="position:absolute;left:3px;top:86.0px;width:8px;height:3px;background:#e4e6ea"></div>
<span style="position:absolute;left:57.00px;top:56.13px;line-height:1;white-space:pre;font-family:'Liberation Sans',sans-serif;font-size:23px;font-weight:normal;color:#111;letter-spacing:-0.788px;">BIG MEAT CO</span>
<span style="position:absolute;left:209.10px;top:56.88px;line-height:1;white-space:pre;font-family:'Liberation Sans',sans-serif;font-size:24px;font-weight:normal;color:#0000ff;letter-spacing:-0.589px;text-decoration:underline;text-decoration-thickness:1.8px;text-underline-offset:3.6px;text-decoration-skip-ink:none">BMCO-262327</span>
<span style="position:absolute;left:529.50px;top:56.13px;line-height:1;white-space:pre;font-family:'Liberation Sans',sans-serif;font-size:23px;font-weight:normal;color:#111;letter-spacing:0.146px;">Planning</span>
<span style="position:absolute;left:681.50px;top:56.13px;line-height:1;white-space:pre;font-family:'Liberation Sans',sans-serif;font-size:23px;font-weight:normal;color:#111;letter-spacing:0.488px;">Confirmed</span>
<span style="position:absolute;left:859.50px;top:56.13px;line-height:1;white-space:pre;font-family:'Liberation Sans',sans-serif;font-size:23px;font-weight:normal;color:#111;">Frozen</span>
<span style="position:absolute;left:1051.50px;top:56.13px;line-height:1;white-space:pre;font-family:'Liberation Sans',sans-serif;font-size:23px;font-weight:normal;color:#111;letter-spacing:0.882px;">No</span>
<span style="position:absolute;left:1149.50px;top:56.13px;line-height:1;white-space:pre;font-family:'Liberation Sans',sans-serif;font-size:23px;font-weight:normal;color:#111;letter-spacing:0.882px;">No</span>
<span style="position:absolute;left:1413.50px;top:56.13px;line-height:1;white-space:pre;font-family:'Liberation Sans',sans-serif;font-size:23px;font-weight:normal;color:#111;">Plant</span>
<span style="position:absolute;left:1498.50px;top:56.13px;line-height:1;white-space:pre;font-family:'Liberation Sans',sans-serif;font-size:23px;font-weight:normal;color:#111;letter-spacing:-0.884px;">Busan, KR</span>
<span style="position:absolute;left:1639.00px;top:56.13px;line-height:1;white-space:pre;font-family:'Liberation Sans',sans-serif;font-size:23px;font-weight:normal;color:#111;letter-spacing:0.322px;">November LH</span>
<span style="position:absolute;left:1822.50px;top:56.13px;line-height:1;white-space:pre;font-family:'Liberation Sans',sans-serif;font-size:23px;font-weight:normal;color:#111;letter-spacing:0.520px;">Nov-18-2024</span>
<span style="position:absolute;left:2135.00px;top:56.13px;line-height:1;white-space:pre;font-family:'Liberation Sans',sans-serif;font-size:23px;font-weight:normal;color:#111;">Floor</span>
<span style="position:absolute;left:2297.00px;top:56.13px;line-height:1;white-space:pre;font-family:'Liberation Sans',sans-serif;font-size:23px;font-weight:normal;color:#111;">15436.61 kg</span>
<span style="position:absolute;left:2479.00px;top:56.13px;line-height:1;white-space:pre;font-family:'Liberation Sans',sans-serif;font-size:23px;font-weight:normal;color:#111;">16208.44 kg</span>
<div style="position:absolute;left:11px;top:128.5px;width:2495px;height:2px;background:#000"></div>
<div style="position:absolute;left:3px;top:128.0px;width:8px;height:3px;background:#e4e6ea"></div>
<span style="position:absolute;left:57.00px;top:98.13px;line-height:1;white-space:pre;font-family:'Liberation Sans',sans-serif;font-size:23px;font-weight:normal;color:#111;letter-spacing:-0.788px;">BIG MEAT CO</span>
<span style="position:absolute;left:209.10px;top:98.88px;line-height:1;white-space:pre;font-family:'Liberation Sans',sans-serif;font-size:24px;font-weight:normal;color:#0000ff;letter-spacing:-0.589px;text-decoration:underline;text-decoration-thickness:1.8px;text-underline-offset:3.6px;text-decoration-skip-ink:none">BMCO-265125</span>
<span style="position:absolute;left:529.50px;top:98.13px;line-height:1;white-space:pre;font-family:'Liberation Sans',sans-serif;font-size:23px;font-weight:normal;color:#111;letter-spacing:0.146px;">Planning</span>
<span style="position:absolute;left:681.50px;top:98.13px;line-height:1;white-space:pre;font-family:'Liberation Sans',sans-serif;font-size:23px;font-weight:normal;color:#111;letter-spacing:0.488px;">Confirmed</span>
<span style="position:absolute;left:859.50px;top:98.13px;line-height:1;white-space:pre;font-family:'Liberation Sans',sans-serif;font-size:23px;font-weight:normal;color:#111;">Frozen</span>
<span style="position:absolute;left:1051.50px;top:98.13px;line-height:1;white-space:pre;font-family:'Liberation Sans',sans-serif;font-size:23px;font-weight:normal;color:#111;letter-spacing:0.882px;">No</span>
<span style="position:absolute;left:1149.50px;top:98.13px;line-height:1;white-space:pre;font-family:'Liberation Sans',sans-serif;font-size:23px;font-weight:normal;color:#111;letter-spacing:0.882px;">No</span>
<span style="position:absolute;left:1413.50px;top:98.13px;line-height:1;white-space:pre;font-family:'Liberation Sans',sans-serif;font-size:23px;font-weight:normal;color:#111;">Plant</span>
<span style="position:absolute;left:1498.50px;top:98.13px;line-height:1;white-space:pre;font-family:'Liberation Sans',sans-serif;font-size:23px;font-weight:normal;color:#111;letter-spacing:-0.884px;">Busan, KR</span>
<span style="position:absolute;left:1639.00px;top:98.13px;line-height:1;white-space:pre;font-family:'Liberation Sans',sans-serif;font-size:23px;font-weight:normal;color:#111;letter-spacing:0.294px;">January LH</span>
<span style="position:absolute;left:1822.50px;top:98.13px;line-height:1;white-space:pre;font-family:'Liberation Sans',sans-serif;font-size:23px;font-weight:normal;color:#111;letter-spacing:0.505px;">Jan-27-2025</span>
<span style="position:absolute;left:2135.00px;top:98.13px;line-height:1;white-space:pre;font-family:'Liberation Sans',sans-serif;font-size:23px;font-weight:normal;color:#111;">Floor</span>
<span style="position:absolute;left:2297.00px;top:98.13px;line-height:1;white-space:pre;font-family:'Liberation Sans',sans-serif;font-size:23px;font-weight:normal;color:#111;">12154.31 kg</span>
<span style="position:absolute;left:2479.00px;top:98.13px;line-height:1;white-space:pre;font-family:'Liberation Sans',sans-serif;font-size:23px;font-weight:normal;color:#111;">12762.03 kg</span>
<div style="position:absolute;left:11px;top:170.5px;width:2495px;height:2px;background:#000"></div>
<div style="position:absolute;left:3px;top:170.0px;width:8px;height:3px;background:#e4e6ea"></div>
<span style="position:absolute;left:57.00px;top:140.13px;line-height:1;white-space:pre;font-family:'Liberation Sans',sans-serif;font-size:23px;font-weight:normal;color:#111;letter-spacing:-0.788px;">BIG MEAT CO</span>
<span style="position:absolute;left:209.10px;top:140.88px;line-height:1;white-space:pre;font-family:'Liberation Sans',sans-serif;font-size:24px;font-weight:normal;color:#0000ff;letter-spacing:-0.589px;text-decoration:underline;text-decoration-thickness:1.8px;text-underline-offset:3.6px;text-decoration-skip-ink:none">BMCO-265126</span>
<span style="position:absolute;left:529.50px;top:140.13px;line-height:1;white-space:pre;font-family:'Liberation Sans',sans-serif;font-size:23px;font-weight:normal;color:#111;letter-spacing:0.146px;">Planning</span>
<span style="position:absolute;left:681.50px;top:140.13px;line-height:1;white-space:pre;font-family:'Liberation Sans',sans-serif;font-size:23px;font-weight:normal;color:#111;letter-spacing:0.488px;">Confirmed</span>
<span style="position:absolute;left:859.50px;top:140.13px;line-height:1;white-space:pre;font-family:'Liberation Sans',sans-serif;font-size:23px;font-weight:normal;color:#111;">Frozen</span>
<span style="position:absolute;left:1051.50px;top:140.13px;line-height:1;white-space:pre;font-family:'Liberation Sans',sans-serif;font-size:23px;font-weight:normal;color:#111;letter-spacing:0.882px;">No</span>
<span style="position:absolute;left:1149.50px;top:140.13px;line-height:1;white-space:pre;font-family:'Liberation Sans',sans-serif;font-size:23px;font-weight:normal;color:#111;letter-spacing:0.882px;">No</span>
<span style="position:absolute;left:1413.50px;top:140.13px;line-height:1;white-space:pre;font-family:'Liberation Sans',sans-serif;font-size:23px;font-weight:normal;color:#111;">Plant</span>
<span style="position:absolute;left:1498.50px;top:140.13px;line-height:1;white-space:pre;font-family:'Liberation Sans',sans-serif;font-size:23px;font-weight:normal;color:#111;letter-spacing:-0.884px;">Busan, KR</span>
<span style="position:absolute;left:1639.00px;top:140.13px;line-height:1;white-space:pre;font-family:'Liberation Sans',sans-serif;font-size:23px;font-weight:normal;color:#111;letter-spacing:0.322px;">November LH</span>
<span style="position:absolute;left:1822.50px;top:140.13px;line-height:1;white-space:pre;font-family:'Liberation Sans',sans-serif;font-size:23px;font-weight:normal;color:#111;letter-spacing:0.520px;">Nov-25-2024</span>
<span style="position:absolute;left:2135.00px;top:140.13px;line-height:1;white-space:pre;font-family:'Liberation Sans',sans-serif;font-size:23px;font-weight:normal;color:#111;">Floor</span>
<span style="position:absolute;left:2297.00px;top:140.13px;line-height:1;white-space:pre;font-family:'Liberation Sans',sans-serif;font-size:23px;font-weight:normal;color:#111;">16467.73 kg</span>
<span style="position:absolute;left:2479.00px;top:140.13px;line-height:1;white-space:pre;font-family:'Liberation Sans',sans-serif;font-size:23px;font-weight:normal;color:#111;">17291.12 kg</span>
<div style="position:absolute;left:11px;top:212.5px;width:2495px;height:2px;background:#000"></div>
<div style="position:absolute;left:3px;top:212.0px;width:8px;height:3px;background:#e4e6ea"></div>
<span style="position:absolute;left:57.00px;top:182.13px;line-height:1;white-space:pre;font-family:'Liberation Sans',sans-serif;font-size:23px;font-weight:normal;color:#111;letter-spacing:-0.788px;">BIG MEAT CO</span>
<span style="position:absolute;left:209.10px;top:182.88px;line-height:1;white-space:pre;font-family:'Liberation Sans',sans-serif;font-size:24px;font-weight:normal;color:#0000ff;letter-spacing:-0.589px;text-decoration:underline;text-decoration-thickness:1.8px;text-underline-offset:3.6px;text-decoration-skip-ink:none">BMCO-265128</span>
<span style="position:absolute;left:529.50px;top:182.13px;line-height:1;white-space:pre;font-family:'Liberation Sans',sans-serif;font-size:23px;font-weight:normal;color:#111;letter-spacing:0.146px;">Planning</span>
<span style="position:absolute;left:681.50px;top:182.13px;line-height:1;white-space:pre;font-family:'Liberation Sans',sans-serif;font-size:23px;font-weight:normal;color:#111;letter-spacing:0.488px;">Confirmed</span>
<span style="position:absolute;left:859.50px;top:182.13px;line-height:1;white-space:pre;font-family:'Liberation Sans',sans-serif;font-size:23px;font-weight:normal;color:#111;">Frozen</span>
<span style="position:absolute;left:1051.50px;top:182.13px;line-height:1;white-space:pre;font-family:'Liberation Sans',sans-serif;font-size:23px;font-weight:normal;color:#111;letter-spacing:0.882px;">No</span>
<span style="position:absolute;left:1149.50px;top:182.13px;line-height:1;white-space:pre;font-family:'Liberation Sans',sans-serif;font-size:23px;font-weight:normal;color:#111;letter-spacing:0.882px;">No</span>
<span style="position:absolute;left:1413.50px;top:182.13px;line-height:1;white-space:pre;font-family:'Liberation Sans',sans-serif;font-size:23px;font-weight:normal;color:#111;">Plant</span>
<span style="position:absolute;left:1498.50px;top:182.13px;line-height:1;white-space:pre;font-family:'Liberation Sans',sans-serif;font-size:23px;font-weight:normal;color:#111;letter-spacing:-0.884px;">Busan, KR</span>
<span style="position:absolute;left:1639.00px;top:182.13px;line-height:1;white-space:pre;font-family:'Liberation Sans',sans-serif;font-size:23px;font-weight:normal;color:#111;letter-spacing:0.322px;">November LH</span>
<span style="position:absolute;left:1822.50px;top:182.13px;line-height:1;white-space:pre;font-family:'Liberation Sans',sans-serif;font-size:23px;font-weight:normal;color:#111;letter-spacing:0.520px;">Nov-29-2024</span>
<span style="position:absolute;left:2135.00px;top:182.13px;line-height:1;white-space:pre;font-family:'Liberation Sans',sans-serif;font-size:23px;font-weight:normal;color:#111;">Floor</span>
<span style="position:absolute;left:2297.00px;top:182.13px;line-height:1;white-space:pre;font-family:'Liberation Sans',sans-serif;font-size:23px;font-weight:normal;color:#111;">14898.53 kg</span>
<span style="position:absolute;left:2479.00px;top:182.13px;line-height:1;white-space:pre;font-family:'Liberation Sans',sans-serif;font-size:23px;font-weight:normal;color:#111;">15643.46 kg</span>
<div style="position:absolute;left:11px;top:254.5px;width:2495px;height:2px;background:#000"></div>
<div style="position:absolute;left:3px;top:254.0px;width:8px;height:3px;background:#e4e6ea"></div>
<span style="position:absolute;left:57.00px;top:224.13px;line-height:1;white-space:pre;font-family:'Liberation Sans',sans-serif;font-size:23px;font-weight:normal;color:#111;letter-spacing:-0.788px;">BIG MEAT CO</span>
<span style="position:absolute;left:209.10px;top:224.88px;line-height:1;white-space:pre;font-family:'Liberation Sans',sans-serif;font-size:24px;font-weight:normal;color:#0000ff;letter-spacing:-0.589px;text-decoration:underline;text-decoration-thickness:1.8px;text-underline-offset:3.6px;text-decoration-skip-ink:none">BMCO-265129</span>
<span style="position:absolute;left:529.50px;top:224.13px;line-height:1;white-space:pre;font-family:'Liberation Sans',sans-serif;font-size:23px;font-weight:normal;color:#111;letter-spacing:0.146px;">Planning</span>
<span style="position:absolute;left:681.50px;top:224.13px;line-height:1;white-space:pre;font-family:'Liberation Sans',sans-serif;font-size:23px;font-weight:normal;color:#111;letter-spacing:0.488px;">Confirmed</span>
<span style="position:absolute;left:859.50px;top:224.13px;line-height:1;white-space:pre;font-family:'Liberation Sans',sans-serif;font-size:23px;font-weight:normal;color:#111;">Frozen</span>
<span style="position:absolute;left:1051.50px;top:224.13px;line-height:1;white-space:pre;font-family:'Liberation Sans',sans-serif;font-size:23px;font-weight:normal;color:#111;letter-spacing:0.882px;">No</span>
<span style="position:absolute;left:1149.50px;top:224.13px;line-height:1;white-space:pre;font-family:'Liberation Sans',sans-serif;font-size:23px;font-weight:normal;color:#111;letter-spacing:0.882px;">No</span>
<span style="position:absolute;left:1413.50px;top:224.13px;line-height:1;white-space:pre;font-family:'Liberation Sans',sans-serif;font-size:23px;font-weight:normal;color:#111;">Plant</span>
<span style="position:absolute;left:1498.50px;top:224.13px;line-height:1;white-space:pre;font-family:'Liberation Sans',sans-serif;font-size:23px;font-weight:normal;color:#111;letter-spacing:-0.884px;">Busan, KR</span>
<span style="position:absolute;left:1639.00px;top:224.13px;line-height:1;white-space:pre;font-family:'Liberation Sans',sans-serif;font-size:23px;font-weight:normal;color:#111;letter-spacing:0.325px;">December FH</span>
<span style="position:absolute;left:1822.50px;top:224.13px;line-height:1;white-space:pre;font-family:'Liberation Sans',sans-serif;font-size:23px;font-weight:normal;color:#111;letter-spacing:0.517px;">Dec-9-2024</span>
<span style="position:absolute;left:2135.00px;top:224.13px;line-height:1;white-space:pre;font-family:'Liberation Sans',sans-serif;font-size:23px;font-weight:normal;color:#111;">Floor</span>
<span style="position:absolute;left:2297.00px;top:224.13px;line-height:1;white-space:pre;font-family:'Liberation Sans',sans-serif;font-size:23px;font-weight:normal;color:#111;">18019.29 kg</span>
<span style="position:absolute;left:2479.00px;top:224.13px;line-height:1;white-space:pre;font-family:'Liberation Sans',sans-serif;font-size:23px;font-weight:normal;color:#111;">19920.25 kg</span>
<div style="position:absolute;left:11px;top:296.5px;width:2495px;height:2px;background:#000"></div>
<div style="position:absolute;left:3px;top:296.0px;width:8px;height:3px;background:#e4e6ea"></div>
<span style="position:absolute;left:57.00px;top:266.13px;line-height:1;white-space:pre;font-family:'Liberation Sans',sans-serif;font-size:23px;font-weight:normal;color:#111;letter-spacing:-0.788px;">BIG MEAT CO</span>
<span style="position:absolute;left:209.10px;top:266.88px;line-height:1;white-space:pre;font-family:'Liberation Sans',sans-serif;font-size:24px;font-weight:normal;color:#0000ff;letter-spacing:-0.589px;text-decoration:underline;text-decoration-thickness:1.8px;text-underline-offset:3.6px;text-decoration-skip-ink:none">BMCO-265130</span>
<span style="position:absolute;left:529.50px;top:266.13px;line-height:1;white-space:pre;font-family:'Liberation Sans',sans-serif;font-size:23px;font-weight:normal;color:#111;letter-spacing:0.146px;">Planning</span>
<span style="position:absolute;left:681.50px;top:266.13px;line-height:1;white-space:pre;font-family:'Liberation Sans',sans-serif;font-size:23px;font-weight:normal;color:#111;letter-spacing:0.488px;">Confirmed</span>
<span style="position:absolute;left:859.50px;top:266.13px;line-height:1;white-space:pre;font-family:'Liberation Sans',sans-serif;font-size:23px;font-weight:normal;color:#111;">Frozen</span>
<span style="position:absolute;left:1051.50px;top:266.13px;line-height:1;white-space:pre;font-family:'Liberation Sans',sans-serif;font-size:23px;font-weight:normal;color:#111;letter-spacing:0.882px;">No</span>
<span style="position:absolute;left:1149.50px;top:266.13px;line-height:1;white-space:pre;font-family:'Liberation Sans',sans-serif;font-size:23px;font-weight:normal;color:#111;letter-spacing:0.882px;">No</span>
<span style="position:absolute;left:1413.50px;top:266.13px;line-height:1;white-space:pre;font-family:'Liberation Sans',sans-serif;font-size:23px;font-weight:normal;color:#111;">Plant</span>
<span style="position:absolute;left:1498.50px;top:266.13px;line-height:1;white-space:pre;font-family:'Liberation Sans',sans-serif;font-size:23px;font-weight:normal;color:#111;letter-spacing:-0.884px;">Busan, KR</span>
<span style="position:absolute;left:1639.00px;top:266.13px;line-height:1;white-space:pre;font-family:'Liberation Sans',sans-serif;font-size:23px;font-weight:normal;color:#111;letter-spacing:0.322px;">December LH</span>
<span style="position:absolute;left:1822.50px;top:266.13px;line-height:1;white-space:pre;font-family:'Liberation Sans',sans-serif;font-size:23px;font-weight:normal;color:#111;letter-spacing:0.520px;">Dec-16-2024</span>
<span style="position:absolute;left:2135.00px;top:266.13px;line-height:1;white-space:pre;font-family:'Liberation Sans',sans-serif;font-size:23px;font-weight:normal;color:#111;">Floor</span>
<span style="position:absolute;left:2297.00px;top:266.13px;line-height:1;white-space:pre;font-family:'Liberation Sans',sans-serif;font-size:23px;font-weight:normal;color:#111;">14193.28 kg</span>
<span style="position:absolute;left:2479.00px;top:266.13px;line-height:1;white-space:pre;font-family:'Liberation Sans',sans-serif;font-size:23px;font-weight:normal;color:#111;">15902.94 kg</span>
<div style="position:absolute;left:11px;top:338.5px;width:2495px;height:2px;background:#000"></div>
<div style="position:absolute;left:3px;top:338.0px;width:8px;height:3px;background:#e4e6ea"></div>
<span style="position:absolute;left:57.00px;top:308.13px;line-height:1;white-space:pre;font-family:'Liberation Sans',sans-serif;font-size:23px;font-weight:normal;color:#111;letter-spacing:-0.788px;">BIG MEAT CO</span>
<span style="position:absolute;left:209.10px;top:308.88px;line-height:1;white-space:pre;font-family:'Liberation Sans',sans-serif;font-size:24px;font-weight:normal;color:#0000ff;letter-spacing:-0.589px;text-decoration:underline;text-decoration-thickness:1.8px;text-underline-offset:3.6px;text-decoration-skip-ink:none">BMCO-265131</span>
<span style="position:absolute;left:529.50px;top:308.13px;line-height:1;white-space:pre;font-family:'Liberation Sans',sans-serif;font-size:23px;font-weight:normal;color:#111;letter-spacing:0.146px;">Planning</span>
<span style="position:absolute;left:681.50px;top:308.13px;line-height:1;white-space:pre;font-family:'Liberation Sans',sans-serif;font-size:23px;font-weight:normal;color:#111;letter-spacing:0.488px;">Confirmed</span>
<span style="position:absolute;left:859.50px;top:308.13px;line-height:1;white-space:pre;font-family:'Liberation Sans',sans-serif;font-size:23px;font-weight:normal;color:#111;">Frozen</span>
<span style="position:absolute;left:1051.50px;top:308.13px;line-height:1;white-space:pre;font-family:'Liberation Sans',sans-serif;font-size:23px;font-weight:normal;color:#111;letter-spacing:0.882px;">No</span>
<span style="position:absolute;left:1149.50px;top:308.13px;line-height:1;white-space:pre;font-family:'Liberation Sans',sans-serif;font-size:23px;font-weight:normal;color:#111;letter-spacing:0.882px;">No</span>
<span style="position:absolute;left:1413.50px;top:308.13px;line-height:1;white-space:pre;font-family:'Liberation Sans',sans-serif;font-size:23px;font-weight:normal;color:#111;">Plant</span>
<span style="position:absolute;left:1498.50px;top:308.13px;line-height:1;white-space:pre;font-family:'Liberation Sans',sans-serif;font-size:23px;font-weight:normal;color:#111;letter-spacing:-0.884px;">Busan, KR</span>
<span style="position:absolute;left:1639.00px;top:308.13px;line-height:1;white-space:pre;font-family:'Liberation Sans',sans-serif;font-size:23px;font-weight:normal;color:#111;letter-spacing:0.322px;">December LH</span>
<span style="position:absolute;left:1822.50px;top:308.13px;line-height:1;white-space:pre;font-family:'Liberation Sans',sans-serif;font-size:23px;font-weight:normal;color:#111;letter-spacing:0.520px;">Dec-31-2024</span>
<span style="position:absolute;left:2135.00px;top:308.13px;line-height:1;white-space:pre;font-family:'Liberation Sans',sans-serif;font-size:23px;font-weight:normal;color:#111;">Floor</span>
<span style="position:absolute;left:2297.00px;top:308.13px;line-height:1;white-space:pre;font-family:'Liberation Sans',sans-serif;font-size:23px;font-weight:normal;color:#111;">17525.61 kg</span>
<span style="position:absolute;left:2479.00px;top:308.13px;line-height:1;white-space:pre;font-family:'Liberation Sans',sans-serif;font-size:23px;font-weight:normal;color:#111;">18401.89 kg</span>
<div style="position:absolute;left:11px;top:380.5px;width:2495px;height:2px;background:#000"></div>
<div style="position:absolute;left:3px;top:380.0px;width:8px;height:3px;background:#e4e6ea"></div>
<span style="position:absolute;left:57.00px;top:350.13px;line-height:1;white-space:pre;font-family:'Liberation Sans',sans-serif;font-size:23px;font-weight:normal;color:#111;letter-spacing:-0.788px;">BIG MEAT CO</span>
<span style="position:absolute;left:209.10px;top:350.88px;line-height:1;white-space:pre;font-family:'Liberation Sans',sans-serif;font-size:24px;font-weight:normal;color:#0000ff;letter-spacing:-0.589px;text-decoration:underline;text-decoration-thickness:1.8px;text-underline-offset:3.6px;text-decoration-skip-ink:none">BMCO-265133</span>
<span style="position:absolute;left:529.50px;top:350.13px;line-height:1;white-space:pre;font-family:'Liberation Sans',sans-serif;font-size:23px;font-weight:normal;color:#111;letter-spacing:0.146px;">Planning</span>
<span style="position:absolute;left:681.50px;top:350.13px;line-height:1;white-space:pre;font-family:'Liberation Sans',sans-serif;font-size:23px;font-weight:normal;color:#111;letter-spacing:0.488px;">Confirmed</span>
<span style="position:absolute;left:859.50px;top:350.13px;line-height:1;white-space:pre;font-family:'Liberation Sans',sans-serif;font-size:23px;font-weight:normal;color:#111;">Frozen</span>
<span style="position:absolute;left:1051.50px;top:350.13px;line-height:1;white-space:pre;font-family:'Liberation Sans',sans-serif;font-size:23px;font-weight:normal;color:#111;letter-spacing:0.882px;">No</span>
<span style="position:absolute;left:1149.50px;top:350.13px;line-height:1;white-space:pre;font-family:'Liberation Sans',sans-serif;font-size:23px;font-weight:normal;color:#111;letter-spacing:0.882px;">No</span>
<span style="position:absolute;left:1413.50px;top:350.13px;line-height:1;white-space:pre;font-family:'Liberation Sans',sans-serif;font-size:23px;font-weight:normal;color:#111;">Plant</span>
<span style="position:absolute;left:1498.50px;top:350.13px;line-height:1;white-space:pre;font-family:'Liberation Sans',sans-serif;font-size:23px;font-weight:normal;color:#111;letter-spacing:-0.884px;">Busan, KR</span>
<span style="position:absolute;left:1639.00px;top:350.13px;line-height:1;white-space:pre;font-family:'Liberation Sans',sans-serif;font-size:23px;font-weight:normal;color:#111;letter-spacing:0.322px;">December LH</span>
<span style="position:absolute;left:1822.50px;top:350.13px;line-height:1;white-space:pre;font-family:'Liberation Sans',sans-serif;font-size:23px;font-weight:normal;color:#111;letter-spacing:0.520px;">Dec-30-2024</span>
<span style="position:absolute;left:2135.00px;top:350.13px;line-height:1;white-space:pre;font-family:'Liberation Sans',sans-serif;font-size:23px;font-weight:normal;color:#111;">Floor</span>
<span style="position:absolute;left:2297.00px;top:350.13px;line-height:1;white-space:pre;font-family:'Liberation Sans',sans-serif;font-size:23px;font-weight:normal;color:#111;">18105.00 kg</span>
<span style="position:absolute;left:2479.00px;top:350.13px;line-height:1;white-space:pre;font-family:'Liberation Sans',sans-serif;font-size:23px;font-weight:normal;color:#111;">19010.25 kg</span>
<div style="position:absolute;left:11px;top:422.5px;width:2495px;height:2px;background:#000"></div>
<div style="position:absolute;left:3px;top:422.0px;width:8px;height:3px;background:#e4e6ea"></div>
<span style="position:absolute;left:57.00px;top:392.13px;line-height:1;white-space:pre;font-family:'Liberation Sans',sans-serif;font-size:23px;font-weight:normal;color:#111;letter-spacing:-0.788px;">BIG MEAT CO</span>
<span style="position:absolute;left:209.10px;top:392.88px;line-height:1;white-space:pre;font-family:'Liberation Sans',sans-serif;font-size:24px;font-weight:normal;color:#0000ff;letter-spacing:-0.589px;text-decoration:underline;text-decoration-thickness:1.8px;text-underline-offset:3.6px;text-decoration-skip-ink:none">BMCO-265134</span>
<span style="position:absolute;left:529.50px;top:392.13px;line-height:1;white-space:pre;font-family:'Liberation Sans',sans-serif;font-size:23px;font-weight:normal;color:#111;letter-spacing:0.146px;">Planning</span>
<span style="position:absolute;left:681.50px;top:392.13px;line-height:1;white-space:pre;font-family:'Liberation Sans',sans-serif;font-size:23px;font-weight:normal;color:#111;letter-spacing:0.488px;">Confirmed</span>
<span style="position:absolute;left:859.50px;top:392.13px;line-height:1;white-space:pre;font-family:'Liberation Sans',sans-serif;font-size:23px;font-weight:normal;color:#111;">Frozen</span>
<span style="position:absolute;left:1051.50px;top:392.13px;line-height:1;white-space:pre;font-family:'Liberation Sans',sans-serif;font-size:23px;font-weight:normal;color:#111;letter-spacing:0.882px;">No</span>
<span style="position:absolute;left:1149.50px;top:392.13px;line-height:1;white-space:pre;font-family:'Liberation Sans',sans-serif;font-size:23px;font-weight:normal;color:#111;letter-spacing:0.882px;">No</span>
<span style="position:absolute;left:1413.50px;top:392.13px;line-height:1;white-space:pre;font-family:'Liberation Sans',sans-serif;font-size:23px;font-weight:normal;color:#111;">Plant</span>
<span style="position:absolute;left:1498.50px;top:392.13px;line-height:1;white-space:pre;font-family:'Liberation Sans',sans-serif;font-size:23px;font-weight:normal;color:#111;letter-spacing:-0.884px;">Busan, KR</span>
<span style="position:absolute;left:1639.00px;top:392.13px;line-height:1;white-space:pre;font-family:'Liberation Sans',sans-serif;font-size:23px;font-weight:normal;color:#111;letter-spacing:0.322px;">December LH</span>
<span style="position:absolute;left:1822.50px;top:392.13px;line-height:1;white-space:pre;font-family:'Liberation Sans',sans-serif;font-size:23px;font-weight:normal;color:#111;letter-spacing:0.520px;">Dec-30-2024</span>
<span style="position:absolute;left:2135.00px;top:392.13px;line-height:1;white-space:pre;font-family:'Liberation Sans',sans-serif;font-size:23px;font-weight:normal;color:#111;">Floor</span>
<span style="position:absolute;left:2297.00px;top:392.13px;line-height:1;white-space:pre;font-family:'Liberation Sans',sans-serif;font-size:23px;font-weight:normal;color:#111;">11825.00 kg</span>
<span style="position:absolute;left:2479.00px;top:392.13px;line-height:1;white-space:pre;font-family:'Liberation Sans',sans-serif;font-size:23px;font-weight:normal;color:#111;">12416.25 kg</span>
<div style="position:absolute;left:11px;top:464.5px;width:2495px;height:2px;background:#000"></div>
<div style="position:absolute;left:3px;top:464.0px;width:8px;height:3px;background:#e4e6ea"></div>
<span style="position:absolute;left:57.00px;top:434.13px;line-height:1;white-space:pre;font-family:'Liberation Sans',sans-serif;font-size:23px;font-weight:normal;color:#111;letter-spacing:-0.788px;">BIG MEAT CO</span>
<span style="position:absolute;left:209.10px;top:434.88px;line-height:1;white-space:pre;font-family:'Liberation Sans',sans-serif;font-size:24px;font-weight:normal;color:#0000ff;letter-spacing:-0.589px;text-decoration:underline;text-decoration-thickness:1.8px;text-underline-offset:3.6px;text-decoration-skip-ink:none">BMCO-265124</span>
<span style="position:absolute;left:529.50px;top:434.13px;line-height:1;white-space:pre;font-family:'Liberation Sans',sans-serif;font-size:23px;font-weight:normal;color:#111;letter-spacing:0.146px;">Planning</span>
<span style="position:absolute;left:681.50px;top:434.13px;line-height:1;white-space:pre;font-family:'Liberation Sans',sans-serif;font-size:23px;font-weight:normal;color:#111;letter-spacing:0.488px;">Confirmed</span>
<span style="position:absolute;left:859.50px;top:434.13px;line-height:1;white-space:pre;font-family:'Liberation Sans',sans-serif;font-size:23px;font-weight:normal;color:#111;">Frozen</span>
<span style="position:absolute;left:1051.50px;top:434.13px;line-height:1;white-space:pre;font-family:'Liberation Sans',sans-serif;font-size:23px;font-weight:normal;color:#111;letter-spacing:0.882px;">No</span>
<span style="position:absolute;left:1149.50px;top:434.13px;line-height:1;white-space:pre;font-family:'Liberation Sans',sans-serif;font-size:23px;font-weight:normal;color:#111;letter-spacing:0.882px;">No</span>
<span style="position:absolute;left:1413.50px;top:434.13px;line-height:1;white-space:pre;font-family:'Liberation Sans',sans-serif;font-size:23px;font-weight:normal;color:#111;">Plant</span>
<span style="position:absolute;left:1498.50px;top:434.13px;line-height:1;white-space:pre;font-family:'Liberation Sans',sans-serif;font-size:23px;font-weight:normal;color:#111;letter-spacing:-0.884px;">Busan, KR</span>
<span style="position:absolute;left:1639.00px;top:434.13px;line-height:1;white-space:pre;font-family:'Liberation Sans',sans-serif;font-size:23px;font-weight:normal;color:#111;letter-spacing:0.297px;">January FH</span>
<span style="position:absolute;left:1822.50px;top:434.13px;line-height:1;white-space:pre;font-family:'Liberation Sans',sans-serif;font-size:23px;font-weight:normal;color:#111;letter-spacing:0.505px;">Jan-13-2025</span>
<span style="position:absolute;left:2135.00px;top:434.13px;line-height:1;white-space:pre;font-family:'Liberation Sans',sans-serif;font-size:23px;font-weight:normal;color:#111;">Floor</span>
<span style="position:absolute;left:2297.00px;top:434.13px;line-height:1;white-space:pre;font-family:'Liberation Sans',sans-serif;font-size:23px;font-weight:normal;color:#111;">16424.20 kg</span>
<span style="position:absolute;left:2479.00px;top:434.13px;line-height:1;white-space:pre;font-family:'Liberation Sans',sans-serif;font-size:23px;font-weight:normal;color:#111;">17245.41 kg</span>
<div style="position:absolute;left:11px;top:506.5px;width:2495px;height:2px;background:#000"></div>
<div style="position:absolute;left:3px;top:506.0px;width:8px;height:3px;background:#e4e6ea"></div>
<span style="position:absolute;left:57.00px;top:476.13px;line-height:1;white-space:pre;font-family:'Liberation Sans',sans-serif;font-size:23px;font-weight:normal;color:#111;letter-spacing:-0.788px;">BIG MEAT CO</span>
<span style="position:absolute;left:209.10px;top:476.88px;line-height:1;white-space:pre;font-family:'Liberation Sans',sans-serif;font-size:24px;font-weight:normal;color:#0000ff;letter-spacing:-0.589px;text-decoration:underline;text-decoration-thickness:1.8px;text-underline-offset:3.6px;text-decoration-skip-ink:none">BMCO-266181</span>
<span style="position:absolute;left:373.50px;top:476.13px;line-height:1;white-space:pre;font-family:'Liberation Sans',sans-serif;font-size:23px;font-weight:normal;color:#111;">INN266181</span>
<span style="position:absolute;left:529.50px;top:476.13px;line-height:1;white-space:pre;font-family:'Liberation Sans',sans-serif;font-size:23px;font-weight:normal;color:#111;letter-spacing:0.146px;">Planning</span>
<span style="position:absolute;left:681.50px;top:476.13px;line-height:1;white-space:pre;font-family:'Liberation Sans',sans-serif;font-size:23px;font-weight:normal;color:#111;letter-spacing:0.488px;">Confirmed</span>
<span style="position:absolute;left:859.50px;top:476.13px;line-height:1;white-space:pre;font-family:'Liberation Sans',sans-serif;font-size:23px;font-weight:normal;color:#111;">Frozen</span>
<span style="position:absolute;left:1051.50px;top:476.13px;line-height:1;white-space:pre;font-family:'Liberation Sans',sans-serif;font-size:23px;font-weight:normal;color:#111;letter-spacing:0.882px;">No</span>
<span style="position:absolute;left:1149.50px;top:476.13px;line-height:1;white-space:pre;font-family:'Liberation Sans',sans-serif;font-size:23px;font-weight:normal;color:#111;letter-spacing:0.882px;">No</span>
<span style="position:absolute;left:1413.50px;top:476.13px;line-height:1;white-space:pre;font-family:'Liberation Sans',sans-serif;font-size:23px;font-weight:normal;color:#111;">Plant</span>
<span style="position:absolute;left:1498.50px;top:476.13px;line-height:1;white-space:pre;font-family:'Liberation Sans',sans-serif;font-size:23px;font-weight:normal;color:#111;letter-spacing:-0.884px;">Busan, KR</span>
<span style="position:absolute;left:1639.00px;top:476.13px;line-height:1;white-space:pre;font-family:'Liberation Sans',sans-serif;font-size:23px;font-weight:normal;color:#111;letter-spacing:0.322px;">December LH</span>
<span style="position:absolute;left:1822.50px;top:476.13px;line-height:1;white-space:pre;font-family:'Liberation Sans',sans-serif;font-size:23px;font-weight:normal;color:#111;letter-spacing:0.520px;">Dec-18-2024</span>
<span style="position:absolute;left:1968.50px;top:476.13px;line-height:1;white-space:pre;font-family:'Liberation Sans',sans-serif;font-size:23px;font-weight:normal;color:#111;letter-spacing:0.520px;">Dec-30-2024</span>
<span style="position:absolute;left:2135.00px;top:476.13px;line-height:1;white-space:pre;font-family:'Liberation Sans',sans-serif;font-size:23px;font-weight:normal;color:#111;">Floor</span>
<span style="position:absolute;left:2297.00px;top:476.13px;line-height:1;white-space:pre;font-family:'Liberation Sans',sans-serif;font-size:23px;font-weight:normal;color:#111;">17119.16 kg</span>
<span style="position:absolute;left:2479.00px;top:476.13px;line-height:1;white-space:pre;font-family:'Liberation Sans',sans-serif;font-size:23px;font-weight:normal;color:#111;">17975.12 kg</span>
<div style="position:absolute;left:11px;top:548.5px;width:2495px;height:2px;background:#000"></div>
<div style="position:absolute;left:3px;top:548.0px;width:8px;height:3px;background:#e4e6ea"></div>
<span style="position:absolute;left:57.00px;top:518.13px;line-height:1;white-space:pre;font-family:'Liberation Sans',sans-serif;font-size:23px;font-weight:normal;color:#111;letter-spacing:-0.788px;">BIG MEAT CO</span>
<span style="position:absolute;left:209.10px;top:518.88px;line-height:1;white-space:pre;font-family:'Liberation Sans',sans-serif;font-size:24px;font-weight:normal;color:#0000ff;letter-spacing:-0.589px;text-decoration:underline;text-decoration-thickness:1.8px;text-underline-offset:3.6px;text-decoration-skip-ink:none">BMCO-266183</span>
<span style="position:absolute;left:529.50px;top:518.13px;line-height:1;white-space:pre;font-family:'Liberation Sans',sans-serif;font-size:23px;font-weight:normal;color:#111;letter-spacing:0.146px;">Planning</span>
<span style="position:absolute;left:681.50px;top:518.13px;line-height:1;white-space:pre;font-family:'Liberation Sans',sans-serif;font-size:23px;font-weight:normal;color:#111;letter-spacing:0.488px;">Confirmed</span>
<span style="position:absolute;left:859.50px;top:518.13px;line-height:1;white-space:pre;font-family:'Liberation Sans',sans-serif;font-size:23px;font-weight:normal;color:#111;">Frozen</span>
<span style="position:absolute;left:1051.50px;top:518.13px;line-height:1;white-space:pre;font-family:'Liberation Sans',sans-serif;font-size:23px;font-weight:normal;color:#111;letter-spacing:0.882px;">No</span>
<span style="position:absolute;left:1149.50px;top:518.13px;line-height:1;white-space:pre;font-family:'Liberation Sans',sans-serif;font-size:23px;font-weight:normal;color:#111;letter-spacing:0.882px;">No</span>
<span style="position:absolute;left:1413.50px;top:518.13px;line-height:1;white-space:pre;font-family:'Liberation Sans',sans-serif;font-size:23px;font-weight:normal;color:#111;">Plant</span>
<span style="position:absolute;left:1498.50px;top:518.13px;line-height:1;white-space:pre;font-family:'Liberation Sans',sans-serif;font-size:23px;font-weight:normal;color:#111;letter-spacing:-0.884px;">Busan, KR</span>
<span style="position:absolute;left:1639.00px;top:518.13px;line-height:1;white-space:pre;font-family:'Liberation Sans',sans-serif;font-size:23px;font-weight:normal;color:#111;letter-spacing:0.297px;">January FH</span>
<span style="position:absolute;left:1822.50px;top:518.13px;line-height:1;white-space:pre;font-family:'Liberation Sans',sans-serif;font-size:23px;font-weight:normal;color:#111;letter-spacing:0.500px;">Jan-6-2025</span>
<span style="position:absolute;left:2135.00px;top:518.13px;line-height:1;white-space:pre;font-family:'Liberation Sans',sans-serif;font-size:23px;font-weight:normal;color:#111;">Floor</span>
<span style="position:absolute;left:2297.00px;top:518.13px;line-height:1;white-space:pre;font-family:'Liberation Sans',sans-serif;font-size:23px;font-weight:normal;color:#111;">13246.48 kg</span>
<span style="position:absolute;left:2479.00px;top:518.13px;line-height:1;white-space:pre;font-family:'Liberation Sans',sans-serif;font-size:23px;font-weight:normal;color:#111;">13908.80 kg</span>
<div style="position:absolute;left:11px;top:590.5px;width:2495px;height:2px;background:#000"></div>
<div style="position:absolute;left:3px;top:590.0px;width:8px;height:3px;background:#e4e6ea"></div>
<span style="position:absolute;left:57.00px;top:560.13px;line-height:1;white-space:pre;font-family:'Liberation Sans',sans-serif;font-size:23px;font-weight:normal;color:#111;letter-spacing:-0.788px;">BIG MEAT CO</span>
<span style="position:absolute;left:209.10px;top:560.88px;line-height:1;white-space:pre;font-family:'Liberation Sans',sans-serif;font-size:24px;font-weight:normal;color:#0000ff;letter-spacing:-0.589px;text-decoration:underline;text-decoration-thickness:1.8px;text-underline-offset:3.6px;text-decoration-skip-ink:none">BMCO-266184</span>
<span style="position:absolute;left:529.50px;top:560.13px;line-height:1;white-space:pre;font-family:'Liberation Sans',sans-serif;font-size:23px;font-weight:normal;color:#111;letter-spacing:0.146px;">Planning</span>
<span style="position:absolute;left:681.50px;top:560.13px;line-height:1;white-space:pre;font-family:'Liberation Sans',sans-serif;font-size:23px;font-weight:normal;color:#111;letter-spacing:0.488px;">Confirmed</span>
<span style="position:absolute;left:859.50px;top:560.13px;line-height:1;white-space:pre;font-family:'Liberation Sans',sans-serif;font-size:23px;font-weight:normal;color:#111;">Frozen</span>
<span style="position:absolute;left:1051.50px;top:560.13px;line-height:1;white-space:pre;font-family:'Liberation Sans',sans-serif;font-size:23px;font-weight:normal;color:#111;letter-spacing:0.882px;">No</span>
<span style="position:absolute;left:1149.50px;top:560.13px;line-height:1;white-space:pre;font-family:'Liberation Sans',sans-serif;font-size:23px;font-weight:normal;color:#111;letter-spacing:0.882px;">No</span>
<span style="position:absolute;left:1413.50px;top:560.13px;line-height:1;white-space:pre;font-family:'Liberation Sans',sans-serif;font-size:23px;font-weight:normal;color:#111;">Plant</span>
<span style="position:absolute;left:1498.50px;top:560.13px;line-height:1;white-space:pre;font-family:'Liberation Sans',sans-serif;font-size:23px;font-weight:normal;color:#111;letter-spacing:-0.884px;">Busan, KR</span>
<span style="position:absolute;left:1639.00px;top:560.13px;line-height:1;white-space:pre;font-family:'Liberation Sans',sans-serif;font-size:23px;font-weight:normal;color:#111;letter-spacing:0.297px;">January FH</span>
<span style="position:absolute;left:1822.50px;top:560.13px;line-height:1;white-space:pre;font-family:'Liberation Sans',sans-serif;font-size:23px;font-weight:normal;color:#111;letter-spacing:0.505px;">Jan-13-2025</span>
<span style="position:absolute;left:2135.00px;top:560.13px;line-height:1;white-space:pre;font-family:'Liberation Sans',sans-serif;font-size:23px;font-weight:normal;color:#111;">Floor</span>
<span style="position:absolute;left:2297.00px;top:560.13px;line-height:1;white-space:pre;font-family:'Liberation Sans',sans-serif;font-size:23px;font-weight:normal;color:#111;">18049.70 kg</span>
<span style="position:absolute;left:2479.00px;top:560.13px;line-height:1;white-space:pre;font-family:'Liberation Sans',sans-serif;font-size:23px;font-weight:normal;color:#111;">18952.19 kg</span>
<div style="position:absolute;left:11px;top:632.5px;width:2495px;height:2px;background:#000"></div>
<div style="position:absolute;left:3px;top:632.0px;width:8px;height:3px;background:#e4e6ea"></div>
<span style="position:absolute;left:57.00px;top:602.13px;line-height:1;white-space:pre;font-family:'Liberation Sans',sans-serif;font-size:23px;font-weight:normal;color:#111;letter-spacing:-0.788px;">BIG MEAT CO</span>
<span style="position:absolute;left:209.10px;top:602.88px;line-height:1;white-space:pre;font-family:'Liberation Sans',sans-serif;font-size:24px;font-weight:normal;color:#0000ff;letter-spacing:-0.589px;text-decoration:underline;text-decoration-thickness:1.8px;text-underline-offset:3.6px;text-decoration-skip-ink:none">BMCO-266185</span>
<span style="position:absolute;left:529.50px;top:602.13px;line-height:1;white-space:pre;font-family:'Liberation Sans',sans-serif;font-size:23px;font-weight:normal;color:#111;letter-spacing:0.146px;">Planning</span>
<span style="position:absolute;left:681.50px;top:602.13px;line-height:1;white-space:pre;font-family:'Liberation Sans',sans-serif;font-size:23px;font-weight:normal;color:#111;letter-spacing:0.488px;">Confirmed</span>
<span style="position:absolute;left:859.50px;top:602.13px;line-height:1;white-space:pre;font-family:'Liberation Sans',sans-serif;font-size:23px;font-weight:normal;color:#111;">Frozen</span>
<span style="position:absolute;left:1051.50px;top:602.13px;line-height:1;white-space:pre;font-family:'Liberation Sans',sans-serif;font-size:23px;font-weight:normal;color:#111;letter-spacing:0.882px;">No</span>
<span style="position:absolute;left:1149.50px;top:602.13px;line-height:1;white-space:pre;font-family:'Liberation Sans',sans-serif;font-size:23px;font-weight:normal;color:#111;letter-spacing:0.882px;">No</span>
<span style="position:absolute;left:1413.50px;top:602.13px;line-height:1;white-space:pre;font-family:'Liberation Sans',sans-serif;font-size:23px;font-weight:normal;color:#111;">Plant</span>
<span style="position:absolute;left:1498.50px;top:602.13px;line-height:1;white-space:pre;font-family:'Liberation Sans',sans-serif;font-size:23px;font-weight:normal;color:#111;letter-spacing:-0.884px;">Busan, KR</span>
<span style="position:absolute;left:1639.00px;top:602.13px;line-height:1;white-space:pre;font-family:'Liberation Sans',sans-serif;font-size:23px;font-weight:normal;color:#111;letter-spacing:0.297px;">January FH</span>
<span style="position:absolute;left:1822.50px;top:602.13px;line-height:1;white-space:pre;font-family:'Liberation Sans',sans-serif;font-size:23px;font-weight:normal;color:#111;letter-spacing:0.505px;">Jan-15-2025</span>
<span style="position:absolute;left:2135.00px;top:602.13px;line-height:1;white-space:pre;font-family:'Liberation Sans',sans-serif;font-size:23px;font-weight:normal;color:#111;">Floor</span>
<span style="position:absolute;left:2297.00px;top:602.13px;line-height:1;white-space:pre;font-family:'Liberation Sans',sans-serif;font-size:23px;font-weight:normal;color:#111;">16161.25 kg</span>
<span style="position:absolute;left:2479.00px;top:602.13px;line-height:1;white-space:pre;font-family:'Liberation Sans',sans-serif;font-size:23px;font-weight:normal;color:#111;">16969.31 kg</span>
<div style="position:absolute;left:11px;top:674.5px;width:2495px;height:2px;background:#000"></div>
<div style="position:absolute;left:3px;top:674.0px;width:8px;height:3px;background:#e4e6ea"></div>
<span style="position:absolute;left:57.00px;top:644.13px;line-height:1;white-space:pre;font-family:'Liberation Sans',sans-serif;font-size:23px;font-weight:normal;color:#111;letter-spacing:-0.788px;">BIG MEAT CO</span>
<span style="position:absolute;left:209.10px;top:644.88px;line-height:1;white-space:pre;font-family:'Liberation Sans',sans-serif;font-size:24px;font-weight:normal;color:#0000ff;letter-spacing:-0.589px;text-decoration:underline;text-decoration-thickness:1.8px;text-underline-offset:3.6px;text-decoration-skip-ink:none">BMCO-266186</span>
<span style="position:absolute;left:529.50px;top:644.13px;line-height:1;white-space:pre;font-family:'Liberation Sans',sans-serif;font-size:23px;font-weight:normal;color:#111;letter-spacing:0.146px;">Planning</span>
<span style="position:absolute;left:681.50px;top:644.13px;line-height:1;white-space:pre;font-family:'Liberation Sans',sans-serif;font-size:23px;font-weight:normal;color:#111;letter-spacing:0.488px;">Confirmed</span>
<span style="position:absolute;left:859.50px;top:644.13px;line-height:1;white-space:pre;font-family:'Liberation Sans',sans-serif;font-size:23px;font-weight:normal;color:#111;">Frozen</span>
<span style="position:absolute;left:1051.50px;top:644.13px;line-height:1;white-space:pre;font-family:'Liberation Sans',sans-serif;font-size:23px;font-weight:normal;color:#111;letter-spacing:0.882px;">No</span>
<span style="position:absolute;left:1149.50px;top:644.13px;line-height:1;white-space:pre;font-family:'Liberation Sans',sans-serif;font-size:23px;font-weight:normal;color:#111;letter-spacing:0.882px;">No</span>
<span style="position:absolute;left:1413.50px;top:644.13px;line-height:1;white-space:pre;font-family:'Liberation Sans',sans-serif;font-size:23px;font-weight:normal;color:#111;">Plant</span>
<span style="position:absolute;left:1498.50px;top:644.13px;line-height:1;white-space:pre;font-family:'Liberation Sans',sans-serif;font-size:23px;font-weight:normal;color:#111;letter-spacing:-0.884px;">Busan, KR</span>
<span style="position:absolute;left:1639.00px;top:644.13px;line-height:1;white-space:pre;font-family:'Liberation Sans',sans-serif;font-size:23px;font-weight:normal;color:#111;letter-spacing:0.294px;">January LH</span>
<span style="position:absolute;left:1822.50px;top:644.13px;line-height:1;white-space:pre;font-family:'Liberation Sans',sans-serif;font-size:23px;font-weight:normal;color:#111;letter-spacing:0.505px;">Jan-20-2025</span>
<span style="position:absolute;left:2135.00px;top:644.13px;line-height:1;white-space:pre;font-family:'Liberation Sans',sans-serif;font-size:23px;font-weight:normal;color:#111;">Floor</span>
<span style="position:absolute;left:2297.00px;top:644.13px;line-height:1;white-space:pre;font-family:'Liberation Sans',sans-serif;font-size:23px;font-weight:normal;color:#111;">11604.35 kg</span>
<span style="position:absolute;left:2479.00px;top:644.13px;line-height:1;white-space:pre;font-family:'Liberation Sans',sans-serif;font-size:23px;font-weight:normal;color:#111;">12184.57 kg</span>
<div style="position:absolute;left:11px;top:716.5px;width:2495px;height:2px;background:#000"></div>
<div style="position:absolute;left:3px;top:716.0px;width:8px;height:3px;background:#e4e6ea"></div>
<span style="position:absolute;left:57.00px;top:686.13px;line-height:1;white-space:pre;font-family:'Liberation Sans',sans-serif;font-size:23px;font-weight:normal;color:#111;letter-spacing:-0.788px;">BIG MEAT CO</span>
<span style="position:absolute;left:209.10px;top:686.88px;line-height:1;white-space:pre;font-family:'Liberation Sans',sans-serif;font-size:24px;font-weight:normal;color:#0000ff;letter-spacing:-0.589px;text-decoration:underline;text-decoration-thickness:1.8px;text-underline-offset:3.6px;text-decoration-skip-ink:none">BMCO-266187</span>
<span style="position:absolute;left:529.50px;top:686.13px;line-height:1;white-space:pre;font-family:'Liberation Sans',sans-serif;font-size:23px;font-weight:normal;color:#111;letter-spacing:0.146px;">Planning</span>
<span style="position:absolute;left:681.50px;top:686.13px;line-height:1;white-space:pre;font-family:'Liberation Sans',sans-serif;font-size:23px;font-weight:normal;color:#111;letter-spacing:0.488px;">Confirmed</span>
<span style="position:absolute;left:859.50px;top:686.13px;line-height:1;white-space:pre;font-family:'Liberation Sans',sans-serif;font-size:23px;font-weight:normal;color:#111;">Frozen</span>
<span style="position:absolute;left:1051.50px;top:686.13px;line-height:1;white-space:pre;font-family:'Liberation Sans',sans-serif;font-size:23px;font-weight:normal;color:#111;letter-spacing:0.882px;">No</span>
<span style="position:absolute;left:1149.50px;top:686.13px;line-height:1;white-space:pre;font-family:'Liberation Sans',sans-serif;font-size:23px;font-weight:normal;color:#111;letter-spacing:0.882px;">No</span>
<span style="position:absolute;left:1413.50px;top:686.13px;line-height:1;white-space:pre;font-family:'Liberation Sans',sans-serif;font-size:23px;font-weight:normal;color:#111;">Plant</span>
<span style="position:absolute;left:1498.50px;top:686.13px;line-height:1;white-space:pre;font-family:'Liberation Sans',sans-serif;font-size:23px;font-weight:normal;color:#111;letter-spacing:-0.884px;">Busan, KR</span>
<span style="position:absolute;left:1639.00px;top:686.13px;line-height:1;white-space:pre;font-family:'Liberation Sans',sans-serif;font-size:23px;font-weight:normal;color:#111;letter-spacing:0.294px;">January LH</span>
<span style="position:absolute;left:1822.50px;top:686.13px;line-height:1;white-space:pre;font-family:'Liberation Sans',sans-serif;font-size:23px;font-weight:normal;color:#111;letter-spacing:0.505px;">Jan-27-2025</span>
<span style="position:absolute;left:2135.00px;top:686.13px;line-height:1;white-space:pre;font-family:'Liberation Sans',sans-serif;font-size:23px;font-weight:normal;color:#111;">Floor</span>
<span style="position:absolute;left:2297.00px;top:686.13px;line-height:1;white-space:pre;font-family:'Liberation Sans',sans-serif;font-size:23px;font-weight:normal;color:#111;">15559.14 kg</span>
<span style="position:absolute;left:2479.00px;top:686.13px;line-height:1;white-space:pre;font-family:'Liberation Sans',sans-serif;font-size:23px;font-weight:normal;color:#111;">16337.10 kg</span>
<div style="position:absolute;left:11px;top:758.5px;width:2495px;height:2px;background:#000"></div>
<div style="position:absolute;left:3px;top:758.0px;width:8px;height:3px;background:#e4e6ea"></div>
<span style="position:absolute;left:57.00px;top:728.13px;line-height:1;white-space:pre;font-family:'Liberation Sans',sans-serif;font-size:23px;font-weight:normal;color:#111;letter-spacing:-0.788px;">BIG MEAT CO</span>
<span style="position:absolute;left:209.10px;top:728.88px;line-height:1;white-space:pre;font-family:'Liberation Sans',sans-serif;font-size:24px;font-weight:normal;color:#0000ff;letter-spacing:-0.589px;text-decoration:underline;text-decoration-thickness:1.8px;text-underline-offset:3.6px;text-decoration-skip-ink:none">BMCO-266188</span>
<span style="position:absolute;left:529.50px;top:728.13px;line-height:1;white-space:pre;font-family:'Liberation Sans',sans-serif;font-size:23px;font-weight:normal;color:#111;letter-spacing:0.146px;">Planning</span>
<span style="position:absolute;left:681.50px;top:728.13px;line-height:1;white-space:pre;font-family:'Liberation Sans',sans-serif;font-size:23px;font-weight:normal;color:#111;letter-spacing:0.488px;">Confirmed</span>
<span style="position:absolute;left:859.50px;top:728.13px;line-height:1;white-space:pre;font-family:'Liberation Sans',sans-serif;font-size:23px;font-weight:normal;color:#111;">Frozen</span>
<span style="position:absolute;left:1051.50px;top:728.13px;line-height:1;white-space:pre;font-family:'Liberation Sans',sans-serif;font-size:23px;font-weight:normal;color:#111;letter-spacing:0.882px;">No</span>
<span style="position:absolute;left:1149.50px;top:728.13px;line-height:1;white-space:pre;font-family:'Liberation Sans',sans-serif;font-size:23px;font-weight:normal;color:#111;letter-spacing:0.882px;">No</span>
<span style="position:absolute;left:1413.50px;top:728.13px;line-height:1;white-space:pre;font-family:'Liberation Sans',sans-serif;font-size:23px;font-weight:normal;color:#111;">Plant</span>
<span style="position:absolute;left:1498.50px;top:728.13px;line-height:1;white-space:pre;font-family:'Liberation Sans',sans-serif;font-size:23px;font-weight:normal;color:#111;letter-spacing:-0.884px;">Busan, KR</span>
<span style="position:absolute;left:1639.00px;top:728.13px;line-height:1;white-space:pre;font-family:'Liberation Sans',sans-serif;font-size:23px;font-weight:normal;color:#111;letter-spacing:0.293px;">February FH</span>
<span style="position:absolute;left:1822.50px;top:728.13px;line-height:1;white-space:pre;font-family:'Liberation Sans',sans-serif;font-size:23px;font-weight:normal;color:#111;letter-spacing:0.511px;">Feb-3-2025</span>
<span style="position:absolute;left:2135.00px;top:728.13px;line-height:1;white-space:pre;font-family:'Liberation Sans',sans-serif;font-size:23px;font-weight:normal;color:#111;">Floor</span>
<span style="position:absolute;left:2297.00px;top:728.13px;line-height:1;white-space:pre;font-family:'Liberation Sans',sans-serif;font-size:23px;font-weight:normal;color:#111;">13985.44 kg</span>
<span style="position:absolute;left:2479.00px;top:728.13px;line-height:1;white-space:pre;font-family:'Liberation Sans',sans-serif;font-size:23px;font-weight:normal;color:#111;">14684.71 kg</span>
<div style="position:absolute;left:11px;top:800.5px;width:2495px;height:2px;background:#000"></div>
<div style="position:absolute;left:3px;top:800.0px;width:8px;height:3px;background:#e4e6ea"></div>
<span style="position:absolute;left:57.00px;top:770.13px;line-height:1;white-space:pre;font-family:'Liberation Sans',sans-serif;font-size:23px;font-weight:normal;color:#111;letter-spacing:-0.788px;">BIG MEAT CO</span>
<span style="position:absolute;left:209.10px;top:770.88px;line-height:1;white-space:pre;font-family:'Liberation Sans',sans-serif;font-size:24px;font-weight:normal;color:#0000ff;letter-spacing:-0.589px;text-decoration:underline;text-decoration-thickness:1.8px;text-underline-offset:3.6px;text-decoration-skip-ink:none">BMCO-266189</span>
<span style="position:absolute;left:529.50px;top:770.13px;line-height:1;white-space:pre;font-family:'Liberation Sans',sans-serif;font-size:23px;font-weight:normal;color:#111;letter-spacing:0.146px;">Planning</span>
<span style="position:absolute;left:681.50px;top:770.13px;line-height:1;white-space:pre;font-family:'Liberation Sans',sans-serif;font-size:23px;font-weight:normal;color:#111;letter-spacing:0.488px;">Confirmed</span>
<span style="position:absolute;left:859.50px;top:770.13px;line-height:1;white-space:pre;font-family:'Liberation Sans',sans-serif;font-size:23px;font-weight:normal;color:#111;">Frozen</span>
<span style="position:absolute;left:1051.50px;top:770.13px;line-height:1;white-space:pre;font-family:'Liberation Sans',sans-serif;font-size:23px;font-weight:normal;color:#111;letter-spacing:0.882px;">No</span>
<span style="position:absolute;left:1149.50px;top:770.13px;line-height:1;white-space:pre;font-family:'Liberation Sans',sans-serif;font-size:23px;font-weight:normal;color:#111;letter-spacing:0.882px;">No</span>
<span style="position:absolute;left:1413.50px;top:770.13px;line-height:1;white-space:pre;font-family:'Liberation Sans',sans-serif;font-size:23px;font-weight:normal;color:#111;">Plant</span>
<span style="position:absolute;left:1498.50px;top:770.13px;line-height:1;white-space:pre;font-family:'Liberation Sans',sans-serif;font-size:23px;font-weight:normal;color:#111;letter-spacing:-0.884px;">Busan, KR</span>
<span style="position:absolute;left:1639.00px;top:770.13px;line-height:1;white-space:pre;font-family:'Liberation Sans',sans-serif;font-size:23px;font-weight:normal;color:#111;letter-spacing:0.293px;">February FH</span>
<span style="position:absolute;left:1822.50px;top:770.13px;line-height:1;white-space:pre;font-family:'Liberation Sans',sans-serif;font-size:23px;font-weight:normal;color:#111;letter-spacing:0.515px;">Feb-10-2025</span>
<span style="position:absolute;left:2135.00px;top:770.13px;line-height:1;white-space:pre;font-family:'Liberation Sans',sans-serif;font-size:23px;font-weight:normal;color:#111;">Floor</span>
<span style="position:absolute;left:2297.00px;top:770.13px;line-height:1;white-space:pre;font-family:'Liberation Sans',sans-serif;font-size:23px;font-weight:normal;color:#111;">17707.59 kg</span>
<span style="position:absolute;left:2479.00px;top:770.13px;line-height:1;white-space:pre;font-family:'Liberation Sans',sans-serif;font-size:23px;font-weight:normal;color:#111;">18592.97 kg</span>
<div style="position:absolute;left:11px;top:842.5px;width:2495px;height:2px;background:#000"></div>
<div style="position:absolute;left:3px;top:842.0px;width:8px;height:3px;background:#e4e6ea"></div>
<span style="position:absolute;left:57.00px;top:812.13px;line-height:1;white-space:pre;font-family:'Liberation Sans',sans-serif;font-size:23px;font-weight:normal;color:#111;letter-spacing:-0.788px;">BIG MEAT CO</span>
<span style="position:absolute;left:209.10px;top:812.88px;line-height:1;white-space:pre;font-family:'Liberation Sans',sans-serif;font-size:24px;font-weight:normal;color:#0000ff;letter-spacing:-0.589px;text-decoration:underline;text-decoration-thickness:1.8px;text-underline-offset:3.6px;text-decoration-skip-ink:none">BMCO-266190</span>
<span style="position:absolute;left:529.50px;top:812.13px;line-height:1;white-space:pre;font-family:'Liberation Sans',sans-serif;font-size:23px;font-weight:normal;color:#111;letter-spacing:0.146px;">Planning</span>
<span style="position:absolute;left:681.50px;top:812.13px;line-height:1;white-space:pre;font-family:'Liberation Sans',sans-serif;font-size:23px;font-weight:normal;color:#111;letter-spacing:0.488px;">Confirmed</span>
<span style="position:absolute;left:859.50px;top:812.13px;line-height:1;white-space:pre;font-family:'Liberation Sans',sans-serif;font-size:23px;font-weight:normal;color:#111;">Frozen</span>
<span style="position:absolute;left:1051.50px;top:812.13px;line-height:1;white-space:pre;font-family:'Liberation Sans',sans-serif;font-size:23px;font-weight:normal;color:#111;letter-spacing:0.882px;">No</span>
<span style="position:absolute;left:1149.50px;top:812.13px;line-height:1;white-space:pre;font-family:'Liberation Sans',sans-serif;font-size:23px;font-weight:normal;color:#111;letter-spacing:0.882px;">No</span>
<span style="position:absolute;left:1413.50px;top:812.13px;line-height:1;white-space:pre;font-family:'Liberation Sans',sans-serif;font-size:23px;font-weight:normal;color:#111;">Plant</span>
<span style="position:absolute;left:1498.50px;top:812.13px;line-height:1;white-space:pre;font-family:'Liberation Sans',sans-serif;font-size:23px;font-weight:normal;color:#111;letter-spacing:-0.884px;">Busan, KR</span>
<span style="position:absolute;left:1639.00px;top:812.13px;line-height:1;white-space:pre;font-family:'Liberation Sans',sans-serif;font-size:23px;font-weight:normal;color:#111;letter-spacing:0.291px;">February LH</span>
<span style="position:absolute;left:1822.50px;top:812.13px;line-height:1;white-space:pre;font-family:'Liberation Sans',sans-serif;font-size:23px;font-weight:normal;color:#111;letter-spacing:0.515px;">Feb-17-2025</span>
<span style="position:absolute;left:2135.00px;top:812.13px;line-height:1;white-space:pre;font-family:'Liberation Sans',sans-serif;font-size:23px;font-weight:normal;color:#111;">Floor</span>
<span style="position:absolute;left:2297.00px;top:812.13px;line-height:1;white-space:pre;font-family:'Liberation Sans',sans-serif;font-size:23px;font-weight:normal;color:#111;">12534.89 kg</span>
<span style="position:absolute;left:2479.00px;top:812.13px;line-height:1;white-space:pre;font-family:'Liberation Sans',sans-serif;font-size:23px;font-weight:normal;color:#111;">13161.63 kg</span>
<div style="position:absolute;left:11px;top:884.5px;width:2495px;height:2px;background:#000"></div>
<div style="position:absolute;left:3px;top:884.0px;width:8px;height:3px;background:#e4e6ea"></div>
<span style="position:absolute;left:57.00px;top:854.13px;line-height:1;white-space:pre;font-family:'Liberation Sans',sans-serif;font-size:23px;font-weight:normal;color:#111;letter-spacing:-0.788px;">BIG MEAT CO</span>
<span style="position:absolute;left:209.10px;top:854.88px;line-height:1;white-space:pre;font-family:'Liberation Sans',sans-serif;font-size:24px;font-weight:normal;color:#0000ff;letter-spacing:-0.589px;text-decoration:underline;text-decoration-thickness:1.8px;text-underline-offset:3.6px;text-decoration-skip-ink:none">BMCO-266182</span>
<span style="position:absolute;left:529.50px;top:854.13px;line-height:1;white-space:pre;font-family:'Liberation Sans',sans-serif;font-size:23px;font-weight:normal;color:#111;letter-spacing:0.146px;">Planning</span>
<span style="position:absolute;left:681.50px;top:854.13px;line-height:1;white-space:pre;font-family:'Liberation Sans',sans-serif;font-size:23px;font-weight:normal;color:#111;letter-spacing:0.488px;">Confirmed</span>
<span style="position:absolute;left:859.50px;top:854.13px;line-height:1;white-space:pre;font-family:'Liberation Sans',sans-serif;font-size:23px;font-weight:normal;color:#111;">Frozen</span>
<span style="position:absolute;left:1051.50px;top:854.13px;line-height:1;white-space:pre;font-family:'Liberation Sans',sans-serif;font-size:23px;font-weight:normal;color:#111;letter-spacing:0.882px;">No</span>
<span style="position:absolute;left:1149.50px;top:854.13px;line-height:1;white-space:pre;font-family:'Liberation Sans',sans-serif;font-size:23px;font-weight:normal;color:#111;letter-spacing:0.882px;">No</span>
<span style="position:absolute;left:1413.50px;top:854.13px;line-height:1;white-space:pre;font-family:'Liberation Sans',sans-serif;font-size:23px;font-weight:normal;color:#111;">Plant</span>
<span style="position:absolute;left:1498.50px;top:854.13px;line-height:1;white-space:pre;font-family:'Liberation Sans',sans-serif;font-size:23px;font-weight:normal;color:#111;letter-spacing:-0.884px;">Busan, KR</span>
<span style="position:absolute;left:1639.00px;top:854.13px;line-height:1;white-space:pre;font-family:'Liberation Sans',sans-serif;font-size:23px;font-weight:normal;color:#111;letter-spacing:0.322px;">December LH</span>
<span style="position:absolute;left:1822.50px;top:854.13px;line-height:1;white-space:pre;font-family:'Liberation Sans',sans-serif;font-size:23px;font-weight:normal;color:#111;letter-spacing:0.520px;">Dec-23-2024</span>
<span style="position:absolute;left:2135.00px;top:854.13px;line-height:1;white-space:pre;font-family:'Liberation Sans',sans-serif;font-size:23px;font-weight:normal;color:#111;">Floor</span>
<span style="position:absolute;left:2297.00px;top:854.13px;line-height:1;white-space:pre;font-family:'Liberation Sans',sans-serif;font-size:23px;font-weight:normal;color:#111;">11864.36 kg</span>
<span style="position:absolute;left:2479.00px;top:854.13px;line-height:1;white-space:pre;font-family:'Liberation Sans',sans-serif;font-size:23px;font-weight:normal;color:#111;">12457.58 kg</span>
<div style="position:absolute;left:11px;top:926.5px;width:2495px;height:2px;background:#000"></div>
<div style="position:absolute;left:3px;top:926.0px;width:8px;height:3px;background:#e4e6ea"></div>
<span style="position:absolute;left:57.00px;top:896.13px;line-height:1;white-space:pre;font-family:'Liberation Sans',sans-serif;font-size:23px;font-weight:normal;color:#111;letter-spacing:-0.788px;">BIG MEAT CO</span>
<span style="position:absolute;left:209.10px;top:896.88px;line-height:1;white-space:pre;font-family:'Liberation Sans',sans-serif;font-size:24px;font-weight:normal;color:#0000ff;letter-spacing:-0.589px;text-decoration:underline;text-decoration-thickness:1.8px;text-underline-offset:3.6px;text-decoration-skip-ink:none">BMCO-265123</span>
<span style="position:absolute;left:529.50px;top:896.13px;line-height:1;white-space:pre;font-family:'Liberation Sans',sans-serif;font-size:23px;font-weight:normal;color:#111;letter-spacing:0.146px;">Planning</span>
<span style="position:absolute;left:681.50px;top:896.13px;line-height:1;white-space:pre;font-family:'Liberation Sans',sans-serif;font-size:23px;font-weight:normal;color:#111;letter-spacing:0.488px;">Confirmed</span>
<span style="position:absolute;left:859.50px;top:896.13px;line-height:1;white-space:pre;font-family:'Liberation Sans',sans-serif;font-size:23px;font-weight:normal;color:#111;">Frozen</span>
<span style="position:absolute;left:1051.50px;top:896.13px;line-height:1;white-space:pre;font-family:'Liberation Sans',sans-serif;font-size:23px;font-weight:normal;color:#111;letter-spacing:0.882px;">No</span>
<span style="position:absolute;left:1149.50px;top:896.13px;line-height:1;white-space:pre;font-family:'Liberation Sans',sans-serif;font-size:23px;font-weight:normal;color:#111;letter-spacing:0.882px;">No</span>
<span style="position:absolute;left:1413.50px;top:896.13px;line-height:1;white-space:pre;font-family:'Liberation Sans',sans-serif;font-size:23px;font-weight:normal;color:#111;">Plant</span>
<span style="position:absolute;left:1498.50px;top:896.13px;line-height:1;white-space:pre;font-family:'Liberation Sans',sans-serif;font-size:23px;font-weight:normal;color:#111;letter-spacing:-0.884px;">Busan, KR</span>
<span style="position:absolute;left:1639.00px;top:896.13px;line-height:1;white-space:pre;font-family:'Liberation Sans',sans-serif;font-size:23px;font-weight:normal;color:#111;letter-spacing:0.297px;">January FH</span>
<span style="position:absolute;left:1822.50px;top:896.13px;line-height:1;white-space:pre;font-family:'Liberation Sans',sans-serif;font-size:23px;font-weight:normal;color:#111;letter-spacing:0.500px;">Jan-6-2025</span>
<span style="position:absolute;left:2135.00px;top:896.13px;line-height:1;white-space:pre;font-family:'Liberation Sans',sans-serif;font-size:23px;font-weight:normal;color:#111;">Floor</span>
<span style="position:absolute;left:2297.00px;top:896.13px;line-height:1;white-space:pre;font-family:'Liberation Sans',sans-serif;font-size:23px;font-weight:normal;color:#111;">16880.98 kg</span>
<span style="position:absolute;left:2479.00px;top:896.13px;line-height:1;white-space:pre;font-family:'Liberation Sans',sans-serif;font-size:23px;font-weight:normal;color:#111;">18725.03 kg</span>
<div style="position:absolute;left:11px;top:968.5px;width:2495px;height:2px;background:#000"></div>
<div style="position:absolute;left:3px;top:968.0px;width:8px;height:3px;background:#e4e6ea"></div>
<span style="position:absolute;left:57.00px;top:938.13px;line-height:1;white-space:pre;font-family:'Liberation Sans',sans-serif;font-size:23px;font-weight:normal;color:#111;letter-spacing:-0.788px;">BIG MEAT CO</span>
<span style="position:absolute;left:209.10px;top:938.88px;line-height:1;white-space:pre;font-family:'Liberation Sans',sans-serif;font-size:24px;font-weight:normal;color:#0000ff;letter-spacing:-0.589px;text-decoration:underline;text-decoration-thickness:1.8px;text-underline-offset:3.6px;text-decoration-skip-ink:none">BMCO-265127</span>
<span style="position:absolute;left:529.50px;top:938.13px;line-height:1;white-space:pre;font-family:'Liberation Sans',sans-serif;font-size:23px;font-weight:normal;color:#111;letter-spacing:0.146px;">Planning</span>
<span style="position:absolute;left:681.50px;top:938.13px;line-height:1;white-space:pre;font-family:'Liberation Sans',sans-serif;font-size:23px;font-weight:normal;color:#111;letter-spacing:0.488px;">Confirmed</span>
<span style="position:absolute;left:859.50px;top:938.13px;line-height:1;white-space:pre;font-family:'Liberation Sans',sans-serif;font-size:23px;font-weight:normal;color:#111;">Frozen</span>
<span style="position:absolute;left:1051.50px;top:938.13px;line-height:1;white-space:pre;font-family:'Liberation Sans',sans-serif;font-size:23px;font-weight:normal;color:#111;letter-spacing:0.882px;">No</span>
<span style="position:absolute;left:1149.50px;top:938.13px;line-height:1;white-space:pre;font-family:'Liberation Sans',sans-serif;font-size:23px;font-weight:normal;color:#111;letter-spacing:0.882px;">No</span>
<span style="position:absolute;left:1413.50px;top:938.13px;line-height:1;white-space:pre;font-family:'Liberation Sans',sans-serif;font-size:23px;font-weight:normal;color:#111;">Plant</span>
<span style="position:absolute;left:1498.50px;top:938.13px;line-height:1;white-space:pre;font-family:'Liberation Sans',sans-serif;font-size:23px;font-weight:normal;color:#111;letter-spacing:-0.884px;">Busan, KR</span>
<span style="position:absolute;left:1639.00px;top:938.13px;line-height:1;white-space:pre;font-family:'Liberation Sans',sans-serif;font-size:23px;font-weight:normal;color:#111;letter-spacing:0.322px;">November LH</span>
<span style="position:absolute;left:1822.50px;top:938.13px;line-height:1;white-space:pre;font-family:'Liberation Sans',sans-serif;font-size:23px;font-weight:normal;color:#111;letter-spacing:0.520px;">Nov-27-2024</span>
<span style="position:absolute;left:2135.00px;top:938.13px;line-height:1;white-space:pre;font-family:'Liberation Sans',sans-serif;font-size:23px;font-weight:normal;color:#111;">Floor</span>
<span style="position:absolute;left:2297.00px;top:938.13px;line-height:1;white-space:pre;font-family:'Liberation Sans',sans-serif;font-size:23px;font-weight:normal;color:#111;">13787.75 kg</span>
<span style="position:absolute;left:2479.00px;top:938.13px;line-height:1;white-space:pre;font-family:'Liberation Sans',sans-serif;font-size:23px;font-weight:normal;color:#111;">14477.14 kg</span>
<div style="position:absolute;left:11px;top:1010.5px;width:2495px;height:2px;background:#000"></div>
<div style="position:absolute;left:3px;top:1010.0px;width:8px;height:3px;background:#e4e6ea"></div>
<span style="position:absolute;left:57.00px;top:980.13px;line-height:1;white-space:pre;font-family:'Liberation Sans',sans-serif;font-size:23px;font-weight:normal;color:#111;letter-spacing:-0.788px;">BIG MEAT CO</span>
<span style="position:absolute;left:209.10px;top:980.88px;line-height:1;white-space:pre;font-family:'Liberation Sans',sans-serif;font-size:24px;font-weight:normal;color:#0000ff;letter-spacing:-0.589px;text-decoration:underline;text-decoration-thickness:1.8px;text-underline-offset:3.6px;text-decoration-skip-ink:none">BMCO-265121</span>
<span style="position:absolute;left:529.50px;top:980.13px;line-height:1;white-space:pre;font-family:'Liberation Sans',sans-serif;font-size:23px;font-weight:normal;color:#111;letter-spacing:0.146px;">Planning</span>
<span style="position:absolute;left:681.50px;top:980.13px;line-height:1;white-space:pre;font-family:'Liberation Sans',sans-serif;font-size:23px;font-weight:normal;color:#111;letter-spacing:0.488px;">Confirmed</span>
<span style="position:absolute;left:859.50px;top:980.13px;line-height:1;white-space:pre;font-family:'Liberation Sans',sans-serif;font-size:23px;font-weight:normal;color:#111;">Frozen</span>
<span style="position:absolute;left:1051.50px;top:980.13px;line-height:1;white-space:pre;font-family:'Liberation Sans',sans-serif;font-size:23px;font-weight:normal;color:#111;letter-spacing:0.882px;">No</span>
<span style="position:absolute;left:1149.50px;top:980.13px;line-height:1;white-space:pre;font-family:'Liberation Sans',sans-serif;font-size:23px;font-weight:normal;color:#111;letter-spacing:0.882px;">No</span>
<span style="position:absolute;left:1413.50px;top:980.13px;line-height:1;white-space:pre;font-family:'Liberation Sans',sans-serif;font-size:23px;font-weight:normal;color:#111;">Plant</span>
<span style="position:absolute;left:1498.50px;top:980.13px;line-height:1;white-space:pre;font-family:'Liberation Sans',sans-serif;font-size:23px;font-weight:normal;color:#111;letter-spacing:-0.884px;">Busan, KR</span>
<span style="position:absolute;left:1639.00px;top:980.13px;line-height:1;white-space:pre;font-family:'Liberation Sans',sans-serif;font-size:23px;font-weight:normal;color:#111;letter-spacing:0.322px;">December LH</span>
<span style="position:absolute;left:1822.50px;top:980.13px;line-height:1;white-space:pre;font-family:'Liberation Sans',sans-serif;font-size:23px;font-weight:normal;color:#111;letter-spacing:0.520px;">Dec-16-2024</span>
<span style="position:absolute;left:2135.00px;top:980.13px;line-height:1;white-space:pre;font-family:'Liberation Sans',sans-serif;font-size:23px;font-weight:normal;color:#111;">Floor</span>
<span style="position:absolute;left:2297.00px;top:980.13px;line-height:1;white-space:pre;font-family:'Liberation Sans',sans-serif;font-size:23px;font-weight:normal;color:#111;">11637.95 kg</span>
<span style="position:absolute;left:2479.00px;top:980.13px;line-height:1;white-space:pre;font-family:'Liberation Sans',sans-serif;font-size:23px;font-weight:normal;color:#111;">12219.85 kg</span>
<div style="position:absolute;left:11px;top:1052.5px;width:2495px;height:2px;background:#000"></div>
<div style="position:absolute;left:3px;top:1052.0px;width:8px;height:3px;background:#e4e6ea"></div>
<span style="position:absolute;left:57.00px;top:1022.13px;line-height:1;white-space:pre;font-family:'Liberation Sans',sans-serif;font-size:23px;font-weight:normal;color:#111;letter-spacing:-0.788px;">BIG MEAT CO</span>
<span style="position:absolute;left:209.10px;top:1022.88px;line-height:1;white-space:pre;font-family:'Liberation Sans',sans-serif;font-size:24px;font-weight:normal;color:#0000ff;letter-spacing:-0.589px;text-decoration:underline;text-decoration-thickness:1.8px;text-underline-offset:3.6px;text-decoration-skip-ink:none">BMCO-262333</span>
<span style="position:absolute;left:373.50px;top:1022.13px;line-height:1;white-space:pre;font-family:'Liberation Sans',sans-serif;font-size:23px;font-weight:normal;color:#111;">INN262333</span>
<span style="position:absolute;left:529.50px;top:1022.13px;line-height:1;white-space:pre;font-family:'Liberation Sans',sans-serif;font-size:23px;font-weight:normal;color:#111;letter-spacing:0.146px;">Planning</span>
<span style="position:absolute;left:681.50px;top:1022.13px;line-height:1;white-space:pre;font-family:'Liberation Sans',sans-serif;font-size:23px;font-weight:normal;color:#111;letter-spacing:0.488px;">Confirmed</span>
<span style="position:absolute;left:859.50px;top:1022.13px;line-height:1;white-space:pre;font-family:'Liberation Sans',sans-serif;font-size:23px;font-weight:normal;color:#111;">Frozen</span>
<span style="position:absolute;left:1051.50px;top:1022.13px;line-height:1;white-space:pre;font-family:'Liberation Sans',sans-serif;font-size:23px;font-weight:normal;color:#111;letter-spacing:0.882px;">No</span>
<span style="position:absolute;left:1149.50px;top:1022.13px;line-height:1;white-space:pre;font-family:'Liberation Sans',sans-serif;font-size:23px;font-weight:normal;color:#111;letter-spacing:0.882px;">No</span>
<span style="position:absolute;left:1413.50px;top:1022.13px;line-height:1;white-space:pre;font-family:'Liberation Sans',sans-serif;font-size:23px;font-weight:normal;color:#111;">Plant</span>
<span style="position:absolute;left:1498.50px;top:1022.13px;line-height:1;white-space:pre;font-family:'Liberation Sans',sans-serif;font-size:23px;font-weight:normal;color:#111;letter-spacing:-0.884px;">Busan, KR</span>
<span style="position:absolute;left:1639.00px;top:1022.13px;line-height:1;white-space:pre;font-family:'Liberation Sans',sans-serif;font-size:23px;font-weight:normal;color:#111;letter-spacing:0.322px;">December LH</span>
<span style="position:absolute;left:1822.50px;top:1022.13px;line-height:1;white-space:pre;font-family:'Liberation Sans',sans-serif;font-size:23px;font-weight:normal;color:#111;letter-spacing:0.520px;">Dec-18-2024</span>
<span style="position:absolute;left:2135.00px;top:1022.13px;line-height:1;white-space:pre;font-family:'Liberation Sans',sans-serif;font-size:23px;font-weight:normal;color:#111;">Floor</span>
<span style="position:absolute;left:2297.00px;top:1022.13px;line-height:1;white-space:pre;font-family:'Liberation Sans',sans-serif;font-size:23px;font-weight:normal;color:#111;">16375.00 kg</span>
<span style="position:absolute;left:2479.00px;top:1022.13px;line-height:1;white-space:pre;font-family:'Liberation Sans',sans-serif;font-size:23px;font-weight:normal;color:#111;">17193.75 kg</span>
<div style="position:absolute;left:11px;top:1094.5px;width:2495px;height:2px;background:#000"></div>
<div style="position:absolute;left:3px;top:1094.0px;width:8px;height:3px;background:#e4e6ea"></div>
<span style="position:absolute;left:57.00px;top:1064.13px;line-height:1;white-space:pre;font-family:'Liberation Sans',sans-serif;font-size:23px;font-weight:normal;color:#111;letter-spacing:-0.788px;">BIG MEAT CO</span>
<span style="position:absolute;left:209.10px;top:1064.88px;line-height:1;white-space:pre;font-family:'Liberation Sans',sans-serif;font-size:24px;font-weight:normal;color:#0000ff;letter-spacing:-0.589px;text-decoration:underline;text-decoration-thickness:1.8px;text-underline-offset:3.6px;text-decoration-skip-ink:none">BMCO-265078</span>
<span style="position:absolute;left:373.50px;top:1064.13px;line-height:1;white-space:pre;font-family:'Liberation Sans',sans-serif;font-size:23px;font-weight:normal;color:#111;">INN265078</span>
<span style="position:absolute;left:529.50px;top:1064.13px;line-height:1;white-space:pre;font-family:'Liberation Sans',sans-serif;font-size:23px;font-weight:normal;color:#111;letter-spacing:0.146px;">Planning</span>
<span style="position:absolute;left:681.50px;top:1064.13px;line-height:1;white-space:pre;font-family:'Liberation Sans',sans-serif;font-size:23px;font-weight:normal;color:#111;letter-spacing:0.488px;">Confirmed</span>
<span style="position:absolute;left:859.50px;top:1064.13px;line-height:1;white-space:pre;font-family:'Liberation Sans',sans-serif;font-size:23px;font-weight:normal;color:#111;">Frozen</span>
<span style="position:absolute;left:1051.50px;top:1064.13px;line-height:1;white-space:pre;font-family:'Liberation Sans',sans-serif;font-size:23px;font-weight:normal;color:#111;letter-spacing:0.882px;">No</span>
<span style="position:absolute;left:1149.50px;top:1064.13px;line-height:1;white-space:pre;font-family:'Liberation Sans',sans-serif;font-size:23px;font-weight:normal;color:#111;letter-spacing:0.882px;">No</span>
<span style="position:absolute;left:1413.50px;top:1064.13px;line-height:1;white-space:pre;font-family:'Liberation Sans',sans-serif;font-size:23px;font-weight:normal;color:#111;">Plant</span>
<span style="position:absolute;left:1498.50px;top:1064.13px;line-height:1;white-space:pre;font-family:'Liberation Sans',sans-serif;font-size:23px;font-weight:normal;color:#111;letter-spacing:-0.884px;">Busan, KR</span>
<span style="position:absolute;left:1639.00px;top:1064.13px;line-height:1;white-space:pre;font-family:'Liberation Sans',sans-serif;font-size:23px;font-weight:normal;color:#111;letter-spacing:0.322px;">December LH</span>
<span style="position:absolute;left:1822.50px;top:1064.13px;line-height:1;white-space:pre;font-family:'Liberation Sans',sans-serif;font-size:23px;font-weight:normal;color:#111;letter-spacing:0.520px;">Dec-16-2024</span>
<span style="position:absolute;left:1968.50px;top:1064.13px;line-height:1;white-space:pre;font-family:'Liberation Sans',sans-serif;font-size:23px;font-weight:normal;color:#111;letter-spacing:0.520px;">Dec-30-2024</span>
<span style="position:absolute;left:2135.00px;top:1064.13px;line-height:1;white-space:pre;font-family:'Liberation Sans',sans-serif;font-size:23px;font-weight:normal;color:#111;">Floor</span>
<span style="position:absolute;left:2297.00px;top:1064.13px;line-height:1;white-space:pre;font-family:'Liberation Sans',sans-serif;font-size:23px;font-weight:normal;color:#111;">12473.81 kg</span>
<span style="position:absolute;left:2479.00px;top:1064.13px;line-height:1;white-space:pre;font-family:'Liberation Sans',sans-serif;font-size:23px;font-weight:normal;color:#111;">13097.50 kg</span>
<div style="position:absolute;left:11px;top:1136.5px;width:2495px;height:2px;background:#000"></div>
<div style="position:absolute;left:3px;top:1136.0px;width:8px;height:3px;background:#e4e6ea"></div>
<span style="position:absolute;left:57.00px;top:1106.13px;line-height:1;white-space:pre;font-family:'Liberation Sans',sans-serif;font-size:23px;font-weight:normal;color:#111;letter-spacing:-0.788px;">BIG MEAT CO</span>
<span style="position:absolute;left:209.10px;top:1106.88px;line-height:1;white-space:pre;font-family:'Liberation Sans',sans-serif;font-size:24px;font-weight:normal;color:#0000ff;letter-spacing:-0.589px;text-decoration:underline;text-decoration-thickness:1.8px;text-underline-offset:3.6px;text-decoration-skip-ink:none">BMCO-265080</span>
<span style="position:absolute;left:529.50px;top:1106.13px;line-height:1;white-space:pre;font-family:'Liberation Sans',sans-serif;font-size:23px;font-weight:normal;color:#111;letter-spacing:0.146px;">Planning</span>
<span style="position:absolute;left:681.50px;top:1106.13px;line-height:1;white-space:pre;font-family:'Liberation Sans',sans-serif;font-size:23px;font-weight:normal;color:#111;letter-spacing:0.488px;">Confirmed</span>
<span style="position:absolute;left:859.50px;top:1106.13px;line-height:1;white-space:pre;font-family:'Liberation Sans',sans-serif;font-size:23px;font-weight:normal;color:#111;">Frozen</span>
<span style="position:absolute;left:1051.50px;top:1106.13px;line-height:1;white-space:pre;font-family:'Liberation Sans',sans-serif;font-size:23px;font-weight:normal;color:#111;letter-spacing:0.882px;">No</span>
<span style="position:absolute;left:1149.50px;top:1106.13px;line-height:1;white-space:pre;font-family:'Liberation Sans',sans-serif;font-size:23px;font-weight:normal;color:#111;letter-spacing:0.882px;">No</span>
<span style="position:absolute;left:1413.50px;top:1106.13px;line-height:1;white-space:pre;font-family:'Liberation Sans',sans-serif;font-size:23px;font-weight:normal;color:#111;">Plant</span>
<span style="position:absolute;left:1498.50px;top:1106.13px;line-height:1;white-space:pre;font-family:'Liberation Sans',sans-serif;font-size:23px;font-weight:normal;color:#111;letter-spacing:-0.884px;">Busan, KR</span>
<span style="position:absolute;left:1639.00px;top:1106.13px;line-height:1;white-space:pre;font-family:'Liberation Sans',sans-serif;font-size:23px;font-weight:normal;color:#111;letter-spacing:0.322px;">December LH</span>
<span style="position:absolute;left:1822.50px;top:1106.13px;line-height:1;white-space:pre;font-family:'Liberation Sans',sans-serif;font-size:23px;font-weight:normal;color:#111;letter-spacing:0.520px;">Dec-23-2024</span>
<span style="position:absolute;left:2135.00px;top:1106.13px;line-height:1;white-space:pre;font-family:'Liberation Sans',sans-serif;font-size:23px;font-weight:normal;color:#111;">Floor</span>
<span style="position:absolute;left:2297.00px;top:1106.13px;line-height:1;white-space:pre;font-family:'Liberation Sans',sans-serif;font-size:23px;font-weight:normal;color:#111;">12517.17 kg</span>
<span style="position:absolute;left:2479.00px;top:1106.13px;line-height:1;white-space:pre;font-family:'Liberation Sans',sans-serif;font-size:23px;font-weight:normal;color:#111;">13143.03 kg</span>
<div style="position:absolute;left:11px;top:1178.5px;width:2495px;height:2px;background:#000"></div>
<div style="position:absolute;left:3px;top:1178.0px;width:8px;height:3px;background:#e4e6ea"></div>
<span style="position:absolute;left:57.00px;top:1148.13px;line-height:1;white-space:pre;font-family:'Liberation Sans',sans-serif;font-size:23px;font-weight:normal;color:#111;letter-spacing:-0.788px;">BIG MEAT CO</span>
<span style="position:absolute;left:209.10px;top:1148.88px;line-height:1;white-space:pre;font-family:'Liberation Sans',sans-serif;font-size:24px;font-weight:normal;color:#0000ff;letter-spacing:-0.589px;text-decoration:underline;text-decoration-thickness:1.8px;text-underline-offset:3.6px;text-decoration-skip-ink:none">BMCO-265081</span>
<span style="position:absolute;left:373.50px;top:1148.13px;line-height:1;white-space:pre;font-family:'Liberation Sans',sans-serif;font-size:23px;font-weight:normal;color:#111;">INN265081</span>
<span style="position:absolute;left:529.50px;top:1148.13px;line-height:1;white-space:pre;font-family:'Liberation Sans',sans-serif;font-size:23px;font-weight:normal;color:#111;letter-spacing:0.146px;">Planning</span>
<span style="position:absolute;left:681.50px;top:1148.13px;line-height:1;white-space:pre;font-family:'Liberation Sans',sans-serif;font-size:23px;font-weight:normal;color:#111;letter-spacing:0.488px;">Confirmed</span>
<span style="position:absolute;left:859.50px;top:1148.13px;line-height:1;white-space:pre;font-family:'Liberation Sans',sans-serif;font-size:23px;font-weight:normal;color:#111;">Frozen</span>
<span style="position:absolute;left:1051.50px;top:1148.13px;line-height:1;white-space:pre;font-family:'Liberation Sans',sans-serif;font-size:23px;font-weight:normal;color:#111;letter-spacing:0.882px;">No</span>
<span style="position:absolute;left:1149.50px;top:1148.13px;line-height:1;white-space:pre;font-family:'Liberation Sans',sans-serif;font-size:23px;font-weight:normal;color:#111;letter-spacing:0.882px;">No</span>
<span style="position:absolute;left:1413.50px;top:1148.13px;line-height:1;white-space:pre;font-family:'Liberation Sans',sans-serif;font-size:23px;font-weight:normal;color:#111;">Plant</span>
<span style="position:absolute;left:1498.50px;top:1148.13px;line-height:1;white-space:pre;font-family:'Liberation Sans',sans-serif;font-size:23px;font-weight:normal;color:#111;letter-spacing:-0.884px;">Busan, KR</span>
<span style="position:absolute;left:1639.00px;top:1148.13px;line-height:1;white-space:pre;font-family:'Liberation Sans',sans-serif;font-size:23px;font-weight:normal;color:#111;letter-spacing:0.322px;">December LH</span>
<span style="position:absolute;left:1822.50px;top:1148.13px;line-height:1;white-space:pre;font-family:'Liberation Sans',sans-serif;font-size:23px;font-weight:normal;color:#111;letter-spacing:0.520px;">Dec-17-2024</span>
<span style="position:absolute;left:1968.50px;top:1148.13px;line-height:1;white-space:pre;font-family:'Liberation Sans',sans-serif;font-size:23px;font-weight:normal;color:#111;letter-spacing:0.520px;">Dec-30-2024</span>
<span style="position:absolute;left:2135.00px;top:1148.13px;line-height:1;white-space:pre;font-family:'Liberation Sans',sans-serif;font-size:23px;font-weight:normal;color:#111;">Floor</span>
<span style="position:absolute;left:2297.00px;top:1148.13px;line-height:1;white-space:pre;font-family:'Liberation Sans',sans-serif;font-size:23px;font-weight:normal;color:#111;">15913.87 kg</span>
<span style="position:absolute;left:2479.00px;top:1148.13px;line-height:1;white-space:pre;font-family:'Liberation Sans',sans-serif;font-size:23px;font-weight:normal;color:#111;">16709.56 kg</span>
<div style="position:absolute;left:11px;top:1220.5px;width:2495px;height:2px;background:#000"></div>
<div style="position:absolute;left:3px;top:1220.0px;width:8px;height:3px;background:#e4e6ea"></div>
<span style="position:absolute;left:57.00px;top:1190.13px;line-height:1;white-space:pre;font-family:'Liberation Sans',sans-serif;font-size:23px;font-weight:normal;color:#111;letter-spacing:-0.788px;">BIG MEAT CO</span>
<span style="position:absolute;left:209.10px;top:1190.88px;line-height:1;white-space:pre;font-family:'Liberation Sans',sans-serif;font-size:24px;font-weight:normal;color:#0000ff;letter-spacing:-0.589px;text-decoration:underline;text-decoration-thickness:1.8px;text-underline-offset:3.6px;text-decoration-skip-ink:none">BMCO-265082</span>
<span style="position:absolute;left:529.50px;top:1190.13px;line-height:1;white-space:pre;font-family:'Liberation Sans',sans-serif;font-size:23px;font-weight:normal;color:#111;letter-spacing:0.146px;">Planning</span>
<span style="position:absolute;left:681.50px;top:1190.13px;line-height:1;white-space:pre;font-family:'Liberation Sans',sans-serif;font-size:23px;font-weight:normal;color:#111;letter-spacing:0.488px;">Confirmed</span>
<span style="position:absolute;left:859.50px;top:1190.13px;line-height:1;white-space:pre;font-family:'Liberation Sans',sans-serif;font-size:23px;font-weight:normal;color:#111;">Frozen</span>
<span style="position:absolute;left:1051.50px;top:1190.13px;line-height:1;white-space:pre;font-family:'Liberation Sans',sans-serif;font-size:23px;font-weight:normal;color:#111;letter-spacing:0.882px;">No</span>
<span style="position:absolute;left:1149.50px;top:1190.13px;line-height:1;white-space:pre;font-family:'Liberation Sans',sans-serif;font-size:23px;font-weight:normal;color:#111;letter-spacing:0.882px;">No</span>
<span style="position:absolute;left:1413.50px;top:1190.13px;line-height:1;white-space:pre;font-family:'Liberation Sans',sans-serif;font-size:23px;font-weight:normal;color:#111;">Plant</span>
<span style="position:absolute;left:1498.50px;top:1190.13px;line-height:1;white-space:pre;font-family:'Liberation Sans',sans-serif;font-size:23px;font-weight:normal;color:#111;letter-spacing:-0.884px;">Busan, KR</span>
<span style="position:absolute;left:1639.00px;top:1190.13px;line-height:1;white-space:pre;font-family:'Liberation Sans',sans-serif;font-size:23px;font-weight:normal;color:#111;letter-spacing:0.322px;">December LH</span>
<span style="position:absolute;left:1822.50px;top:1190.13px;line-height:1;white-space:pre;font-family:'Liberation Sans',sans-serif;font-size:23px;font-weight:normal;color:#111;letter-spacing:0.520px;">Dec-27-2024</span>
<span style="position:absolute;left:2135.00px;top:1190.13px;line-height:1;white-space:pre;font-family:'Liberation Sans',sans-serif;font-size:23px;font-weight:normal;color:#111;">Floor</span>
<span style="position:absolute;left:2297.00px;top:1190.13px;line-height:1;white-space:pre;font-family:'Liberation Sans',sans-serif;font-size:23px;font-weight:normal;color:#111;">15827.14 kg</span>
<span style="position:absolute;left:2479.00px;top:1190.13px;line-height:1;white-space:pre;font-family:'Liberation Sans',sans-serif;font-size:23px;font-weight:normal;color:#111;">16618.50 kg</span>
<div style="position:absolute;left:11px;top:1262.5px;width:2495px;height:2px;background:#000"></div>
<div style="position:absolute;left:3px;top:1262.0px;width:8px;height:3px;background:#e4e6ea"></div>
<span style="position:absolute;left:57.00px;top:1232.13px;line-height:1;white-space:pre;font-family:'Liberation Sans',sans-serif;font-size:23px;font-weight:normal;color:#111;letter-spacing:-0.788px;">BIG MEAT CO</span>
<span style="position:absolute;left:209.10px;top:1232.88px;line-height:1;white-space:pre;font-family:'Liberation Sans',sans-serif;font-size:24px;font-weight:normal;color:#0000ff;letter-spacing:-0.589px;text-decoration:underline;text-decoration-thickness:1.8px;text-underline-offset:3.6px;text-decoration-skip-ink:none">BMCO-265122</span>
<span style="position:absolute;left:529.50px;top:1232.13px;line-height:1;white-space:pre;font-family:'Liberation Sans',sans-serif;font-size:23px;font-weight:normal;color:#111;letter-spacing:0.146px;">Planning</span>
<span style="position:absolute;left:681.50px;top:1232.13px;line-height:1;white-space:pre;font-family:'Liberation Sans',sans-serif;font-size:23px;font-weight:normal;color:#111;letter-spacing:0.488px;">Confirmed</span>
<span style="position:absolute;left:859.50px;top:1232.13px;line-height:1;white-space:pre;font-family:'Liberation Sans',sans-serif;font-size:23px;font-weight:normal;color:#111;">Frozen</span>
<span style="position:absolute;left:1051.50px;top:1232.13px;line-height:1;white-space:pre;font-family:'Liberation Sans',sans-serif;font-size:23px;font-weight:normal;color:#111;letter-spacing:0.882px;">No</span>
<span style="position:absolute;left:1149.50px;top:1232.13px;line-height:1;white-space:pre;font-family:'Liberation Sans',sans-serif;font-size:23px;font-weight:normal;color:#111;letter-spacing:0.882px;">No</span>
<span style="position:absolute;left:1413.50px;top:1232.13px;line-height:1;white-space:pre;font-family:'Liberation Sans',sans-serif;font-size:23px;font-weight:normal;color:#111;">Plant</span>
<span style="position:absolute;left:1498.50px;top:1232.13px;line-height:1;white-space:pre;font-family:'Liberation Sans',sans-serif;font-size:23px;font-weight:normal;color:#111;letter-spacing:-0.884px;">Busan, KR</span>
<span style="position:absolute;left:1639.00px;top:1232.13px;line-height:1;white-space:pre;font-family:'Liberation Sans',sans-serif;font-size:23px;font-weight:normal;color:#111;letter-spacing:0.322px;">December LH</span>
<span style="position:absolute;left:1822.50px;top:1232.13px;line-height:1;white-space:pre;font-family:'Liberation Sans',sans-serif;font-size:23px;font-weight:normal;color:#111;letter-spacing:0.520px;">Dec-31-2024</span>
<span style="position:absolute;left:2135.00px;top:1232.13px;line-height:1;white-space:pre;font-family:'Liberation Sans',sans-serif;font-size:23px;font-weight:normal;color:#111;">Floor</span>
<span style="position:absolute;left:2297.00px;top:1232.13px;line-height:1;white-space:pre;font-family:'Liberation Sans',sans-serif;font-size:23px;font-weight:normal;color:#111;">16414.27 kg</span>
<span style="position:absolute;left:2479.00px;top:1232.13px;line-height:1;white-space:pre;font-family:'Liberation Sans',sans-serif;font-size:23px;font-weight:normal;color:#111;">17234.98 kg</span>
<div style="position:absolute;left:11px;top:1304.5px;width:2495px;height:2px;background:#000"></div>
<div style="position:absolute;left:3px;top:1304.0px;width:8px;height:3px;background:#e4e6ea"></div>
<span style="position:absolute;left:57.00px;top:1274.13px;line-height:1;white-space:pre;font-family:'Liberation Sans',sans-serif;font-size:23px;font-weight:normal;color:#111;letter-spacing:-0.788px;">BIG MEAT CO</span>
<span style="position:absolute;left:209.10px;top:1274.88px;line-height:1;white-space:pre;font-family:'Liberation Sans',sans-serif;font-size:24px;font-weight:normal;color:#0000ff;letter-spacing:-0.589px;text-decoration:underline;text-decoration-thickness:1.8px;text-underline-offset:3.6px;text-decoration-skip-ink:none">BMCO-265084</span>
<span style="position:absolute;left:529.50px;top:1274.13px;line-height:1;white-space:pre;font-family:'Liberation Sans',sans-serif;font-size:23px;font-weight:normal;color:#111;letter-spacing:0.146px;">Planning</span>
<span style="position:absolute;left:681.50px;top:1274.13px;line-height:1;white-space:pre;font-family:'Liberation Sans',sans-serif;font-size:23px;font-weight:normal;color:#111;letter-spacing:0.488px;">Confirmed</span>
<span style="position:absolute;left:859.50px;top:1274.13px;line-height:1;white-space:pre;font-family:'Liberation Sans',sans-serif;font-size:23px;font-weight:normal;color:#111;">Frozen</span>
<span style="position:absolute;left:1051.50px;top:1274.13px;line-height:1;white-space:pre;font-family:'Liberation Sans',sans-serif;font-size:23px;font-weight:normal;color:#111;letter-spacing:0.882px;">No</span>
<span style="position:absolute;left:1149.50px;top:1274.13px;line-height:1;white-space:pre;font-family:'Liberation Sans',sans-serif;font-size:23px;font-weight:normal;color:#111;letter-spacing:0.882px;">No</span>
<span style="position:absolute;left:1413.50px;top:1274.13px;line-height:1;white-space:pre;font-family:'Liberation Sans',sans-serif;font-size:23px;font-weight:normal;color:#111;">Plant</span>
<span style="position:absolute;left:1498.50px;top:1274.13px;line-height:1;white-space:pre;font-family:'Liberation Sans',sans-serif;font-size:23px;font-weight:normal;color:#111;letter-spacing:-0.884px;">Busan, KR</span>
<span style="position:absolute;left:1639.00px;top:1274.13px;line-height:1;white-space:pre;font-family:'Liberation Sans',sans-serif;font-size:23px;font-weight:normal;color:#111;letter-spacing:0.322px;">December LH</span>
<span style="position:absolute;left:1822.50px;top:1274.13px;line-height:1;white-space:pre;font-family:'Liberation Sans',sans-serif;font-size:23px;font-weight:normal;color:#111;letter-spacing:0.520px;">Dec-16-2024</span>
<span style="position:absolute;left:2135.00px;top:1274.13px;line-height:1;white-space:pre;font-family:'Liberation Sans',sans-serif;font-size:23px;font-weight:normal;color:#111;">Floor</span>
<span style="position:absolute;left:2297.00px;top:1274.13px;line-height:1;white-space:pre;font-family:'Liberation Sans',sans-serif;font-size:23px;font-weight:normal;color:#111;">15061.08 kg</span>
<span style="position:absolute;left:2479.00px;top:1274.13px;line-height:1;white-space:pre;font-family:'Liberation Sans',sans-serif;font-size:23px;font-weight:normal;color:#111;">15814.13 kg</span>
<div style="position:absolute;left:11px;top:1346.5px;width:2495px;height:2px;background:#000"></div>
<div style="position:absolute;left:3px;top:1346.0px;width:8px;height:3px;background:#e4e6ea"></div>
<span style="position:absolute;left:57.00px;top:1316.13px;line-height:1;white-space:pre;font-family:'Liberation Sans',sans-serif;font-size:23px;font-weight:normal;color:#111;letter-spacing:-0.788px;">BIG MEAT CO</span>
<span style="position:absolute;left:209.10px;top:1316.88px;line-height:1;white-space:pre;font-family:'Liberation Sans',sans-serif;font-size:24px;font-weight:normal;color:#0000ff;letter-spacing:-0.589px;text-decoration:underline;text-decoration-thickness:1.8px;text-underline-offset:3.6px;text-decoration-skip-ink:none">BMCO-265085</span>
<span style="position:absolute;left:529.50px;top:1316.13px;line-height:1;white-space:pre;font-family:'Liberation Sans',sans-serif;font-size:23px;font-weight:normal;color:#111;letter-spacing:0.146px;">Planning</span>
<span style="position:absolute;left:681.50px;top:1316.13px;line-height:1;white-space:pre;font-family:'Liberation Sans',sans-serif;font-size:23px;font-weight:normal;color:#111;letter-spacing:0.488px;">Confirmed</span>
<span style="position:absolute;left:859.50px;top:1316.13px;line-height:1;white-space:pre;font-family:'Liberation Sans',sans-serif;font-size:23px;font-weight:normal;color:#111;">Frozen</span>
<span style="position:absolute;left:1051.50px;top:1316.13px;line-height:1;white-space:pre;font-family:'Liberation Sans',sans-serif;font-size:23px;font-weight:normal;color:#111;letter-spacing:0.882px;">No</span>
<span style="position:absolute;left:1149.50px;top:1316.13px;line-height:1;white-space:pre;font-family:'Liberation Sans',sans-serif;font-size:23px;font-weight:normal;color:#111;letter-spacing:0.882px;">No</span>
<span style="position:absolute;left:1413.50px;top:1316.13px;line-height:1;white-space:pre;font-family:'Liberation Sans',sans-serif;font-size:23px;font-weight:normal;color:#111;">Plant</span>
<span style="position:absolute;left:1498.50px;top:1316.13px;line-height:1;white-space:pre;font-family:'Liberation Sans',sans-serif;font-size:23px;font-weight:normal;color:#111;letter-spacing:-0.884px;">Busan, KR</span>
<span style="position:absolute;left:1639.00px;top:1316.13px;line-height:1;white-space:pre;font-family:'Liberation Sans',sans-serif;font-size:23px;font-weight:normal;color:#111;letter-spacing:0.322px;">December LH</span>
<span style="position:absolute;left:1822.50px;top:1316.13px;line-height:1;white-space:pre;font-family:'Liberation Sans',sans-serif;font-size:23px;font-weight:normal;color:#111;letter-spacing:0.520px;">Dec-16-2024</span>
<span style="position:absolute;left:2135.00px;top:1316.13px;line-height:1;white-space:pre;font-family:'Liberation Sans',sans-serif;font-size:23px;font-weight:normal;color:#111;">Floor</span>
<span style="position:absolute;left:2297.00px;top:1316.13px;line-height:1;white-space:pre;font-family:'Liberation Sans',sans-serif;font-size:23px;font-weight:normal;color:#111;">12835.16 kg</span>
<span style="position:absolute;left:2479.00px;top:1316.13px;line-height:1;white-space:pre;font-family:'Liberation Sans',sans-serif;font-size:23px;font-weight:normal;color:#111;">13476.92 kg</span>
<div style="position:absolute;left:9.5px;top:47px;width:1.5px;height:1300px;background:#e3e3e6"></div>
<div style="position:absolute;left:48.5px;top:47px;width:2px;height:1300px;background:#000"></div>
<div style="position:absolute;left:205.0px;top:47px;width:2px;height:1300px;background:#000"></div>
<div style="position:absolute;left:365.0px;top:47px;width:2px;height:1300px;background:#000"></div>
<div style="position:absolute;left:521.0px;top:47px;width:2px;height:1300px;background:#000"></div>
<div style="position:absolute;left:673.0px;top:47px;width:2px;height:1300px;background:#000"></div>
<div style="position:absolute;left:851.0px;top:47px;width:2px;height:1300px;background:#000"></div>
<div style="position:absolute;left:1043.0px;top:47px;width:2px;height:1300px;background:#000"></div>
<div style="position:absolute;left:1141.0px;top:47px;width:2px;height:1300px;background:#000"></div>
<div style="position:absolute;left:1405.0px;top:47px;width:2px;height:1300px;background:#000"></div>
<div style="position:absolute;left:1490.0px;top:47px;width:2px;height:1300px;background:#000"></div>
<div style="position:absolute;left:1630.5px;top:47px;width:2px;height:1300px;background:#000"></div>
<div style="position:absolute;left:1818.5px;top:47px;width:2px;height:1300px;background:#000"></div>
<div style="position:absolute;left:1964.5px;top:47px;width:2px;height:1300px;background:#000"></div>
<div style="position:absolute;left:2126.5px;top:47px;width:2px;height:1300px;background:#000"></div>
<div style="position:absolute;left:2288.5px;top:47px;width:2px;height:1300px;background:#000"></div>
<div style="position:absolute;left:2470.5px;top:47px;width:2px;height:1300px;background:#000"></div>
</div>
<div style="position:absolute;left:2974px;top:261px;width:33px;height:1340px;background:#f0f0f0"></div>
<div style="position:absolute;left:2974px;top:342px;width:33px;height:125px;background:#cdcdcd"></div>
<svg style="position:absolute;left:2978px;top:315px" width="24" height="24" viewBox="2978 315 24 24" fill="none" stroke="#a3a3a3" stroke-width="2.3"><path d="M2984.15 330.80 L2990.30 323.20 L2996.45 330.80"/></svg>
<svg style="position:absolute;left:2979px;top:1573px" width="24" height="24" viewBox="2979 1573 24 24" fill="none" stroke="#a3a3a3" stroke-width="2.3"><path d="M2985.15 1581.70 L2991.30 1589.30 L2997.45 1581.70"/></svg>
<div style="position:absolute;left:479px;top:1601px;width:2528px;height:34px;background:#f0f0f0"></div>
<div style="position:absolute;left:524px;top:1601px;width:1699px;height:34px;background:#cdcdcd"></div>
<svg style="position:absolute;left:495px;top:1606px" width="24" height="24" viewBox="495 1606 24 24" fill="none" stroke="#a3a3a3" stroke-width="2.3"><path d="M511.30 1611.95 L503.70 1618.80 L511.30 1625.65"/></svg>
<svg style="position:absolute;left:2945px;top:1606px" width="24" height="24" viewBox="2945 1606 24 24" fill="none" stroke="#a3a3a3" stroke-width="2.3"><path d="M2953.40 1611.95 L2961.00 1618.80 L2953.40 1625.65"/></svg>
<span style="position:absolute;left:487.00px;top:1653.53px;line-height:1;white-space:pre;font-family:'Liberation Sans',sans-serif;font-size:23px;font-weight:normal;color:#0000ff;letter-spacing:-0.042px;text-decoration:underline;text-decoration-thickness:1.8px;text-underline-offset:3.4px;text-decoration-skip-ink:none">Save View Settings</span>
<span style="position:absolute;left:704.70px;top:1653.53px;line-height:1;white-space:pre;font-family:'Liberation Sans',sans-serif;font-size:23px;font-weight:normal;color:#0000ff;letter-spacing:0.105px;text-decoration:underline;text-decoration-thickness:1.8px;text-underline-offset:3.4px;text-decoration-skip-ink:none">Clear View Settings</span>
</body></html>
